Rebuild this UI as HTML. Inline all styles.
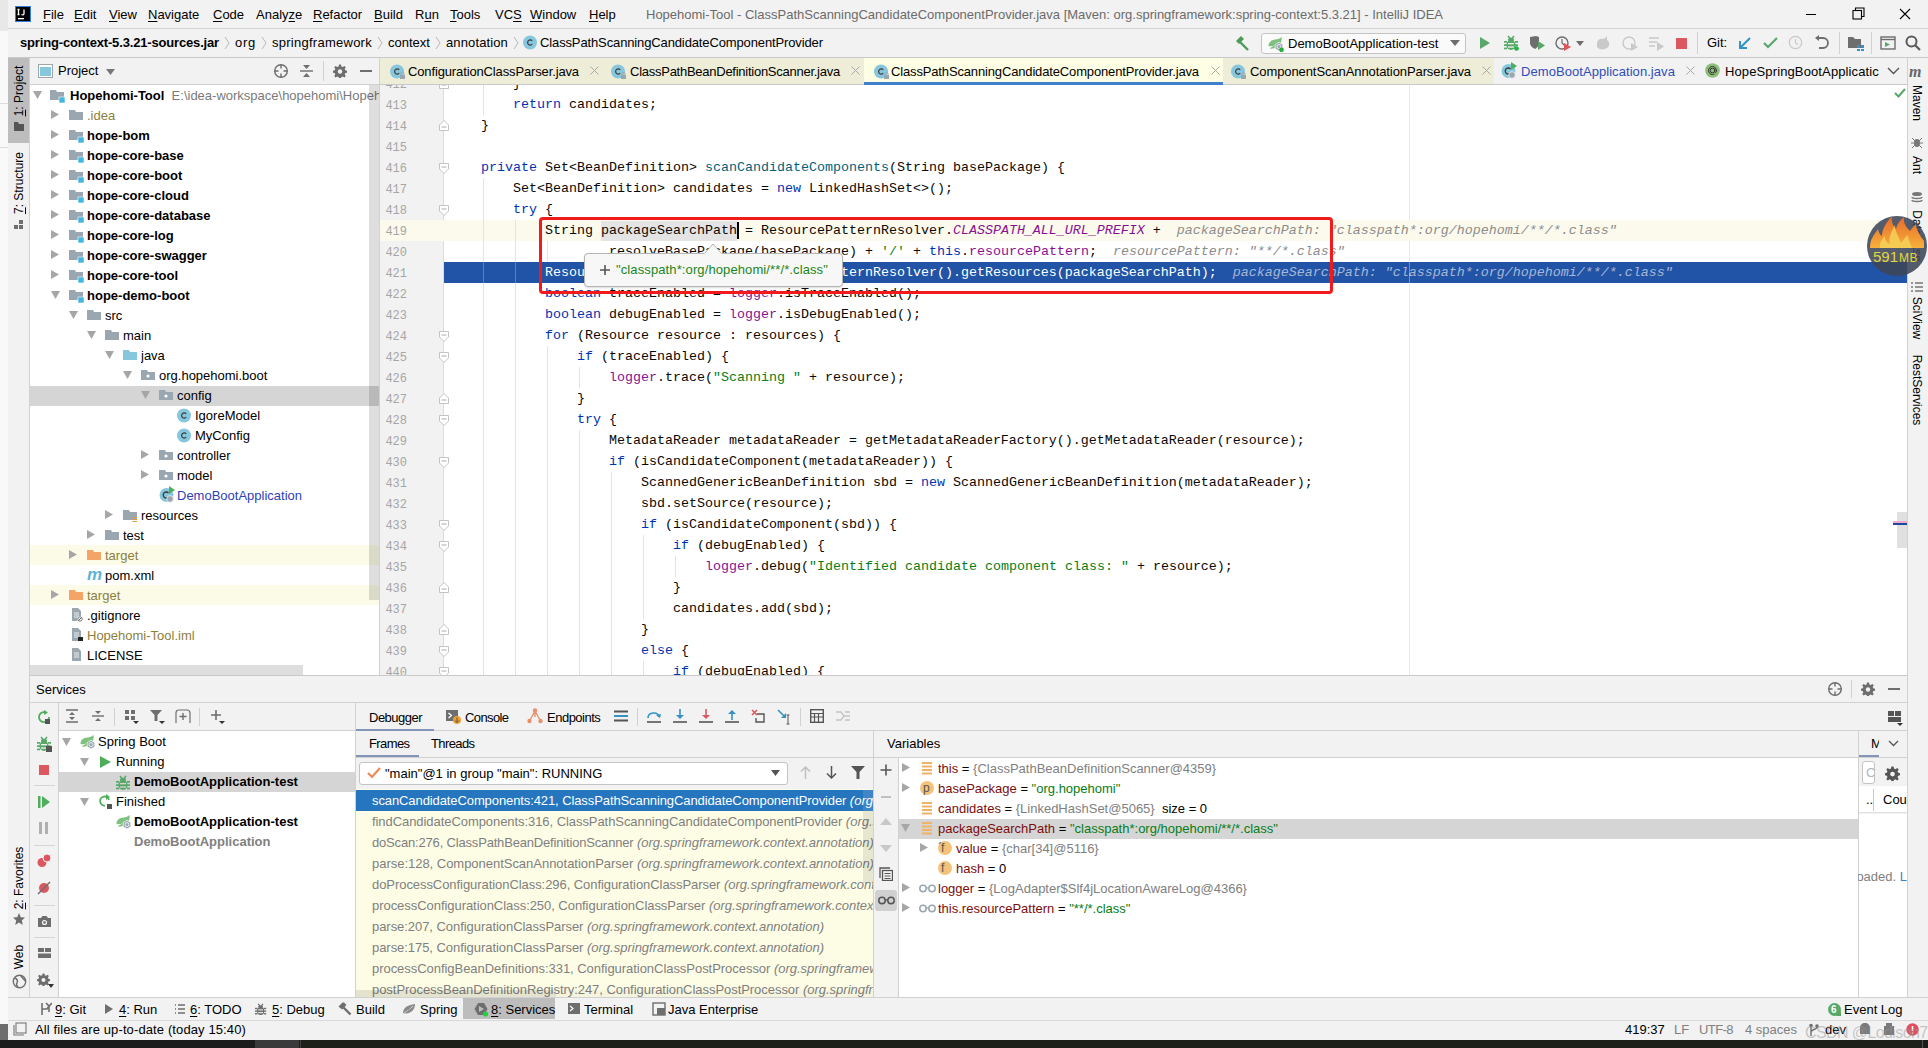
<!DOCTYPE html>
<html><head><meta charset="utf-8">
<style>
*{margin:0;padding:0;box-sizing:border-box}
html,body{width:1928px;height:1048px;overflow:hidden;background:#f2f2f2;font-family:"Liberation Sans",sans-serif;font-size:13px;color:#000}
.a{position:absolute}
.t{position:absolute;white-space:pre;line-height:16px}
.m{font-family:"Liberation Mono",monospace}
u{text-decoration:underline;text-underline-offset:2px}
</style></head><body>

<div class="a" style="left:0px;top:0px;width:8px;height:31px;background:#e8e8e8;"></div>
<div class="a" style="left:0px;top:31px;width:8px;height:1009px;background:#f9f9f9;"></div>
<div class="a" style="left:0px;top:103px;width:8px;height:1px;background:#dcdcdc;"></div>
<div class="a" style="left:0px;top:147px;width:8px;height:1px;background:#dcdcdc;"></div>
<div class="a" style="left:0px;top:1024px;width:8px;height:16px;background:#6e6e6e;"></div>
<div class="a" style="left:8px;top:0px;width:1920px;height:28px;background:#f2f2f2;"></div>
<div class="a" style="left:8px;top:28px;width:1920px;height:1px;background:#d4d4d4;"></div>
<svg class="a" style="left:15px;top:6px;" width="16" height="16" viewBox="0 0 16 16"><rect x="0.5" y="0.5" width="15" height="15" fill="#000" stroke="#2f7fe0"/><path d="M3.5 3.5V8.5M2.5 3.5H4.5M2.5 8.5H4.5M9 3.5V7.5C9 9 7.5 9 6.5 8.5" fill="none" stroke="#fff" stroke-width="1.3"/><rect x="3" y="12" width="6" height="1.3" fill="#fff"/></svg>
<div class="t" style="left:43px;top:7px;color:#000"><u>F</u>ile</div>
<div class="t" style="left:74px;top:7px;color:#000"><u>E</u>dit</div>
<div class="t" style="left:109px;top:7px;color:#000"><u>V</u>iew</div>
<div class="t" style="left:148px;top:7px;color:#000"><u>N</u>avigate</div>
<div class="t" style="left:213px;top:7px;color:#000"><u>C</u>ode</div>
<div class="t" style="left:256px;top:7px;color:#000">Analy<u>z</u>e</div>
<div class="t" style="left:313px;top:7px;color:#000"><u>R</u>efactor</div>
<div class="t" style="left:374px;top:7px;color:#000"><u>B</u>uild</div>
<div class="t" style="left:415px;top:7px;color:#000">R<u>u</u>n</div>
<div class="t" style="left:450px;top:7px;color:#000"><u>T</u>ools</div>
<div class="t" style="left:495px;top:7px;color:#000">VC<u>S</u></div>
<div class="t" style="left:530px;top:7px;color:#000"><u>W</u>indow</div>
<div class="t" style="left:589px;top:7px;color:#000"><u>H</u>elp</div>
<div class="t" style="left:646px;top:7px;color:#6b6b6b">Hopehomi-Tool - ClassPathScanningCandidateComponentProvider.java [Maven: org.springframework:spring-context:5.3.21] - IntelliJ IDEA</div>
<div class="a" style="left:1806px;top:14px;width:10px;height:1px;background:#000;"></div>
<svg class="a" style="left:1852px;top:7px;" width="13" height="13" viewBox="0 0 13 13"><rect x="1" y="3.5" width="8.5" height="8.5" fill="none" stroke="#000" stroke-width="1.1"/><path d="M3.5 3.5V1h8.5v8.5H9.5" fill="none" stroke="#000" stroke-width="1.1"/></svg>
<svg class="a" style="left:1899px;top:8px;" width="12" height="12" viewBox="0 0 12 12"><path d="M1 1L11 11M11 1L1 11" stroke="#000" stroke-width="1.1"/></svg>
<div class="a" style="left:8px;top:29px;width:1920px;height:28px;background:#f2f2f2;"></div>
<div class="a" style="left:8px;top:57px;width:1920px;height:1px;background:#c9c9c9;"></div>
<div class="t" style="left:20px;top:35px;letter-spacing:-0.166px;font-weight:bold">spring-context-5.3.21-sources.jar</div>
<svg class="a" style="left:224px;top:36px;" width="6" height="14" viewBox="0 0 6 14"><path d="M1 1L5 7L1 13" fill="none" stroke="#b8b8b8" stroke-width="1"/></svg>
<div class="t" style="left:235px;top:35px;letter-spacing:0.734px;">org</div>
<svg class="a" style="left:261px;top:36px;" width="6" height="14" viewBox="0 0 6 14"><path d="M1 1L5 7L1 13" fill="none" stroke="#b8b8b8" stroke-width="1"/></svg>
<div class="t" style="left:272px;top:35px;letter-spacing:0.259px;">springframework</div>
<svg class="a" style="left:377px;top:36px;" width="6" height="14" viewBox="0 0 6 14"><path d="M1 1L5 7L1 13" fill="none" stroke="#b8b8b8" stroke-width="1"/></svg>
<div class="t" style="left:388px;top:35px;letter-spacing:0.011px;">context</div>
<svg class="a" style="left:435px;top:36px;" width="6" height="14" viewBox="0 0 6 14"><path d="M1 1L5 7L1 13" fill="none" stroke="#b8b8b8" stroke-width="1"/></svg>
<div class="t" style="left:446px;top:35px;letter-spacing:0.125px;">annotation</div>
<svg class="a" style="left:513px;top:36px;" width="6" height="14" viewBox="0 0 6 14"><path d="M1 1L5 7L1 13" fill="none" stroke="#b8b8b8" stroke-width="1"/></svg>
<svg class="a" style="left:523px;top:35px;" width="16" height="16" viewBox="0 0 16 16"><circle cx="7" cy="7.5" r="7" fill="#86c7de"/><path d="M9.2 5.8A2.6 2.6 0 1 0 9.2 9.2" fill="none" stroke="#3c3c3c" stroke-width="1.2"/></svg>
<div class="t" style="left:540px;top:35px;letter-spacing:-0.127px;">ClassPathScanningCandidateComponentProvider</div>
<svg class="a" style="left:1234px;top:35px;" width="16" height="16" viewBox="0 0 16 16"><path d="M2 6L7 1L10 4L5 9Z" fill="#4d9b57"/><path d="M6 7L14 15" stroke="#4d9b57" stroke-width="2.4"/></svg>
<div class="a" style="left:1261px;top:33px;width:205px;height:21px;background:#fafafa;border:1px solid #c4c4c4;border-radius:3px"></div>
<svg class="a" style="left:1268px;top:36px;" width="16" height="16" viewBox="0 0 16 16"><path d="M0.5 10C0.5 6 3.5 3.8 7.5 3.6C10 3.5 12 2.8 13.5 0.8C14.2 4.5 13 8 10.3 10.2C7.8 12.2 4 13 1.5 12.5C3 11.5 4.5 10.6 6.5 9.6C4.5 10.2 2.3 10.6 0.5 10Z" fill="#7fc27f"/><path d="M11 6.3L14.8 8.5V12.8L11 15L7.2 12.8V8.5Z" fill="#9aa7b0" stroke="#fff" stroke-width="0.7"/><circle cx="11" cy="10.6" r="2" fill="none" stroke="#fff" stroke-width="0.8"/><circle cx="13.5" cy="13.8" r="2.3" fill="#1fb33a"/></svg>
<div class="t" style="left:1288px;top:36px;">DemoBootApplication-test</div>
<svg class="a" style="left:1450px;top:40px;" width="10" height="6" viewBox="0 0 10 6"><path d="M0 0H10L5 6Z" fill="#6e6e6e"/></svg>
<svg class="a" style="left:1479px;top:36px;" width="12" height="14" viewBox="0 0 12 14"><path d="M1 1L11 7L1 13Z" fill="#59a869"/></svg>
<svg class="a" style="left:1504px;top:35px;" width="16" height="16" viewBox="0 0 16 16"><path d="M4 1L6 3.5M10 1L8 3.5" stroke="#59a869" stroke-width="1.5"/><ellipse cx="7" cy="4.8" rx="3" ry="2" fill="#59a869"/><ellipse cx="7" cy="10" rx="4.6" ry="5" fill="#59a869"/><rect x="0" y="6" width="3" height="1.7" fill="#59a869"/><rect x="0" y="9.3" width="3" height="1.7" fill="#59a869"/><rect x="0" y="12.6" width="3" height="1.7" fill="#59a869"/><rect x="11" y="6" width="3" height="1.7" fill="#59a869"/><rect x="11" y="9.3" width="3" height="1.7" fill="#59a869"/><rect x="11" y="12.6" width="3" height="1.7" fill="#59a869"/><rect x="4" y="8" width="6" height="1.3" fill="#f2f2f2"/><rect x="4" y="11.4" width="6" height="1.3" fill="#f2f2f2"/><circle cx="12.5" cy="13.5" r="2.3" fill="#1fb33a"/></svg>
<svg class="a" style="left:1529px;top:35px;" width="17" height="16" viewBox="0 0 17 16"><path d="M1 2L7 1L10 2V8C10 11 8 13 6 14C4 13 1 11 1 8Z" fill="#6e6e6e"/><path d="M9 6L16 10.5L9 15Z" fill="#59a869"/></svg>
<svg class="a" style="left:1555px;top:35px;" width="17" height="16" viewBox="0 0 17 16"><circle cx="7" cy="8" r="6" fill="none" stroke="#6e6e6e" stroke-width="1.4"/><path d="M7 4V8L9 10" stroke="#6e6e6e" stroke-width="1.2" fill="none"/><path d="M9 8L16 12L9 16Z" fill="#e05555"/></svg>
<svg class="a" style="left:1576px;top:41px;" width="8" height="5" viewBox="0 0 8 5"><path d="M0 0H8L4 5Z" fill="#6e6e6e"/></svg>
<svg class="a" style="left:1595px;top:35px;" width="17" height="16" viewBox="0 0 17 16"><path d="M2 9C2 5 5 3 9 4L12 1L12 5C15 7 15 11 12 13C9 15 4 15 2 12Z" fill="#c9c9c9"/></svg>
<svg class="a" style="left:1622px;top:35px;" width="17" height="16" viewBox="0 0 17 16"><circle cx="7" cy="8" r="6" fill="none" stroke="#c9c9c9" stroke-width="1.4"/><path d="M9 8L16 12L9 16Z" fill="#c9c9c9"/></svg>
<svg class="a" style="left:1648px;top:35px;" width="17" height="16" viewBox="0 0 17 16"><path d="M1 3H11M1 7H9M1 11H7" stroke="#c9c9c9" stroke-width="1.6"/><path d="M9 7L16 11.5L9 16Z" fill="#c9c9c9"/></svg>
<div class="a" style="left:1676px;top:38px;width:11px;height:11px;background:#db5860;"></div>
<div class="a" style="left:1697px;top:32px;width:1px;height:22px;background:#d0d0d0;"></div>
<div class="t" style="left:1707px;top:35px;">Git:</div>
<svg class="a" style="left:1738px;top:36px;" width="14" height="14" viewBox="0 0 14 14"><path d="M12 2L3 11M2 5V12H9" fill="none" stroke="#3592c4" stroke-width="2"/></svg>
<svg class="a" style="left:1763px;top:37px;" width="15" height="12" viewBox="0 0 15 12"><path d="M1 6L5 10L14 1" fill="none" stroke="#59a869" stroke-width="2.2"/></svg>
<svg class="a" style="left:1788px;top:35px;" width="15" height="15" viewBox="0 0 15 15"><circle cx="7.5" cy="7.5" r="6.2" fill="none" stroke="#c9c9c9" stroke-width="1.3"/><path d="M7.5 4V8L10 9.5" stroke="#c9c9c9" stroke-width="1.2" fill="none"/></svg>
<svg class="a" style="left:1814px;top:35px;" width="16" height="15" viewBox="0 0 16 15"><path d="M4 3H9A5 5 0 0 1 9 13H5" fill="none" stroke="#6e6e6e" stroke-width="1.8"/><path d="M1 3L5 0V6Z" fill="#6e6e6e"/></svg>
<div class="a" style="left:1839px;top:32px;width:1px;height:22px;background:#d0d0d0;"></div>
<svg class="a" style="left:1847px;top:35px;" width="17" height="16" viewBox="0 0 17 16"><path d="M1 2H6L8 4H14V13H1Z" fill="#6e6e6e"/><rect x="10" y="10" width="3" height="3" fill="#3592c4"/><rect x="14" y="10" width="3" height="3" fill="#3592c4"/><rect x="10" y="14" width="3" height="2" fill="#3592c4"/><rect x="14" y="14" width="3" height="2" fill="#3592c4"/></svg>
<div class="a" style="left:1871px;top:32px;width:1px;height:22px;background:#d0d0d0;"></div>
<svg class="a" style="left:1880px;top:35px;" width="16" height="16" viewBox="0 0 16 16"><rect x="1" y="2" width="14" height="12" fill="none" stroke="#6e6e6e" stroke-width="1.4"/><path d="M1 4.5H15" stroke="#6e6e6e" stroke-width="1.4"/><path d="M5 7L10 9.5L5 12Z" fill="#59a869"/></svg>
<svg class="a" style="left:1905px;top:35px;" width="16" height="16" viewBox="0 0 16 16"><circle cx="6.5" cy="6.5" r="5" fill="none" stroke="#5a5a5a" stroke-width="2"/><path d="M10 10L15 15" stroke="#5a5a5a" stroke-width="2.2"/></svg>
<div class="a" style="left:8px;top:58px;width:21px;height:939px;background:#f2f2f2;"></div>
<div class="a" style="left:29px;top:58px;width:1px;height:939px;background:#d1d1d1;"></div>
<div class="a" style="left:8px;top:58px;width:21px;height:85px;background:#bdbdbd;"></div>
<div class="t" style="left:19px;top:91px;transform:translate(-50%,-50%) rotate(-90deg);font-size:12px"><u>1</u>: Project</div>
<svg class="a" style="left:13px;top:121px;" width="12" height="11" viewBox="0 0 12 11"><path d="M1 1H5L6 3H11V10H1Z" fill="#555"/></svg>
<div class="t" style="left:19px;top:183px;transform:translate(-50%,-50%) rotate(-90deg);font-size:12px"><u>7</u>: Structure</div>
<svg class="a" style="left:13px;top:219px;" width="12" height="11" viewBox="0 0 12 11"><rect x="6" y="1" width="4" height="4" fill="#6e6e6e"/><rect x="1" y="6" width="4" height="4" fill="#6e6e6e"/><rect x="6" y="6" width="4" height="4" fill="#6e6e6e"/></svg>
<div class="t" style="left:19px;top:878px;transform:translate(-50%,-50%) rotate(-90deg);font-size:12px"><u>2</u>: Favorites</div>
<svg class="a" style="left:12px;top:912px;" width="14" height="14" viewBox="0 0 14 14"><path d="M7 1L8.8 5.2L13 5.5L9.8 8.4L10.8 13L7 10.5L3.2 13L4.2 8.4L1 5.5L5.2 5.2Z" fill="#6e6e6e"/></svg>
<div class="t" style="left:19px;top:957px;transform:translate(-50%,-50%) rotate(-90deg);font-size:12px">Web</div>
<svg class="a" style="left:12px;top:974px;" width="15" height="15" viewBox="0 0 15 15"><circle cx="7.5" cy="7.5" r="6.2" fill="none" stroke="#6e6e6e" stroke-width="1.4"/><path d="M3 4C5 5 6 7 5 9C4 10 5 12 6 13M9 2C10 4 12 5 13 7" fill="none" stroke="#6e6e6e" stroke-width="1.4"/></svg>
<div class="a" style="left:1908px;top:58px;width:20px;height:939px;background:#f2f2f2;"></div>
<div class="a" style="left:1907px;top:58px;width:1px;height:939px;background:#d1d1d1;"></div>
<div class="t" style="left:1909px;top:63px;font:italic bold 16px 'Liberation Serif';color:#666">m</div>
<div class="t" style="left:1917px;top:103px;transform:translate(-50%,-50%) rotate(90deg);font-size:12px">Maven</div>
<svg class="a" style="left:1910px;top:135px;" width="14" height="14" viewBox="0 0 14 14"><ellipse cx="7" cy="8" rx="3" ry="4" fill="#777"/><path d="M2 3L5 6M12 3L9 6M1 8H4M10 8H13M2 13L5 10M12 13L9 10" stroke="#777" stroke-width="1"/></svg>
<div class="t" style="left:1917px;top:165px;transform:translate(-50%,-50%) rotate(90deg);font-size:12px">Ant</div>
<svg class="a" style="left:1910px;top:191px;" width="14" height="14" viewBox="0 0 14 14"><ellipse cx="7" cy="3" rx="5" ry="2" fill="#777"/><path d="M2 6C2 8 12 8 12 6M2 9C2 11 12 11 12 9" fill="none" stroke="#777" stroke-width="1.4"/></svg>
<div class="t" style="left:1917px;top:236px;transform:translate(-50%,-50%) rotate(90deg);font-size:12px">Database</div>
<svg class="a" style="left:1910px;top:281px;" width="14" height="12" viewBox="0 0 14 12"><path d="M1 2H3M5 2H13M1 6H3M5 6H13M1 10H3M5 10H13" stroke="#777" stroke-width="1.6"/></svg>
<div class="t" style="left:1917px;top:318px;transform:translate(-50%,-50%) rotate(90deg);font-size:12px">SciView</div>
<div class="t" style="left:1917px;top:390px;transform:translate(-50%,-50%) rotate(90deg);font-size:12px">RestServices</div>
<div class="a" style="left:8px;top:997px;width:1920px;height:23px;background:#f2f2f2;"></div>
<div class="a" style="left:8px;top:997px;width:1920px;height:1px;background:#d1d1d1;"></div>
<svg class="a" style="left:40px;top:1002px;" width="12" height="14" viewBox="0 0 12 14"><path d="M2 13V1M2 7H7L9 4M9 4V10M6 1L9 4L12 1" fill="none" stroke="#6e6e6e" stroke-width="1.6"/></svg>
<div class="t" style="left:55px;top:1002px;"><u>9</u>: Git</div>
<svg class="a" style="left:104px;top:1003px;" width="10" height="12" viewBox="0 0 10 12"><path d="M1 1L9 6L1 11Z" fill="#6e6e6e"/></svg>
<div class="t" style="left:119px;top:1002px;"><u>4</u>: Run</div>
<svg class="a" style="left:174px;top:1004px;" width="12" height="10" viewBox="0 0 12 10"><path d="M1 1H2M4 1H11M1 5H2M4 5H11M1 9H2M4 9H11" stroke="#6e6e6e" stroke-width="1.6"/></svg>
<div class="t" style="left:190px;top:1002px;"><u>6</u>: TODO</div>
<div class="a" style="left:255px;top:1003px;transform:scale(0.8);transform-origin:0 0">
<svg class="a" style="left:0px;top:0px;" width="16" height="16" viewBox="0 0 16 16"><path d="M4 1L6 3.5M10 1L8 3.5" stroke="#6e6e6e" stroke-width="1.5"/><ellipse cx="7" cy="4.8" rx="3" ry="2" fill="#6e6e6e"/><ellipse cx="7" cy="10" rx="4.6" ry="5" fill="#6e6e6e"/><rect x="0" y="6" width="3" height="1.7" fill="#6e6e6e"/><rect x="0" y="9.3" width="3" height="1.7" fill="#6e6e6e"/><rect x="0" y="12.6" width="3" height="1.7" fill="#6e6e6e"/><rect x="11" y="6" width="3" height="1.7" fill="#6e6e6e"/><rect x="11" y="9.3" width="3" height="1.7" fill="#6e6e6e"/><rect x="11" y="12.6" width="3" height="1.7" fill="#6e6e6e"/><rect x="4" y="8" width="6" height="1.3" fill="#f2f2f2"/><rect x="4" y="11.4" width="6" height="1.3" fill="#f2f2f2"/></svg>
</div>
<div class="t" style="left:272px;top:1002px;"><u>5</u>: Debug</div>
<svg class="a" style="left:338px;top:1002px;" width="14" height="14" viewBox="0 0 14 14"><path d="M0.5 4.5L4.5 0.5L6 0.5L8.5 3L4 7.5Z" fill="#6e6e6e"/><path d="M5.5 5.5L12.5 12.5" stroke="#6e6e6e" stroke-width="2.4"/></svg>
<div class="t" style="left:356px;top:1002px;">Build</div>
<svg class="a" style="left:402px;top:1003px;" width="14" height="12" viewBox="0 0 14 12"><path d="M1 10C1 5 5 2 13 1C13 6 10 10 4 10.5C3 10.6 2 10.5 1 10Z" fill="#8a8a8a"/><path d="M2 10C5 8 8 6 11 3" stroke="#f2f2f2" stroke-width="0.8"/></svg>
<div class="t" style="left:420px;top:1002px;">Spring</div>
<div class="a" style="left:463px;top:998px;width:92px;height:21px;background:#bdbdbd;"></div>
<svg class="a" style="left:474px;top:1002px;" width="16" height="15" viewBox="0 0 16 15"><path d="M4 1H10L13.5 7L10 13H4L0.5 7Z" fill="#6e6e6e"/><path d="M5 4L10 7L5 10Z" fill="#bdbdbd"/><circle cx="11.5" cy="12" r="2.6" fill="#1fd33a"/></svg>
<div class="t" style="left:491px;top:1002px;"><u>8</u>: Services</div>
<svg class="a" style="left:567px;top:1002px;" width="14" height="13" viewBox="0 0 14 13"><rect x="1" y="1" width="12" height="11" fill="#6e6e6e"/><path d="M3 4L6 6.5L3 9" fill="none" stroke="#fff" stroke-width="1.2"/></svg>
<div class="t" style="left:584px;top:1002px;">Terminal</div>
<svg class="a" style="left:652px;top:1002px;" width="14" height="14" viewBox="0 0 14 14"><rect x="1" y="1" width="12" height="12" fill="none" stroke="#6e6e6e" stroke-width="1.4"/><rect x="5" y="6" width="8" height="7" fill="#6e6e6e"/></svg>
<div class="t" style="left:668px;top:1002px;">Java Enterprise</div>
<svg class="a" style="left:1827px;top:1002px;" width="15" height="15" viewBox="0 0 15 15"><circle cx="7.5" cy="7.5" r="6.5" fill="#59a869"/><path d="M9 14H14V9Z" fill="#59a869"/></svg>
<div class="t" style="left:1831px;top:1002px;font:bold 10px 'Liberation Sans';color:#fff;line-height:15px">6</div>
<div class="t" style="left:1844px;top:1002px;">Event Log</div>
<div class="a" style="left:8px;top:1020px;width:1920px;height:20px;background:#f2f2f2;"></div>
<div class="a" style="left:8px;top:1020px;width:1920px;height:1px;background:#d9d9d9;"></div>
<svg class="a" style="left:13px;top:1022px;" width="14" height="14" viewBox="0 0 14 14"><rect x="3" y="1" width="10" height="10" fill="none" stroke="#777" stroke-width="1.1"/><path d="M1 3V13H11" fill="none" stroke="#777" stroke-width="1.1"/></svg>
<div class="t" style="left:35px;top:1022px;letter-spacing:0.113px;">All files are up-to-date (today 15:40)</div>
<div class="t" style="left:1625px;top:1022px;">419:37</div>
<div class="t" style="left:1674px;top:1022px;color:#808080">LF</div>
<div class="t" style="left:1699px;top:1022px;letter-spacing:-0.566px;color:#808080">UTF-8</div>
<div class="t" style="left:1745px;top:1022px;color:#808080">4 spaces</div>
<div class="t" style="left:1825px;top:1022px;">dev</div>
<svg class="a" style="left:1807px;top:1023px;" width="14" height="14" viewBox="0 0 14 14"><circle cx="4" cy="2.5" r="1.8" fill="#6e6e6e"/><path d="M4 3V13M4 9C4 6 10 7 10 4" fill="none" stroke="#6e6e6e" stroke-width="1.4"/><circle cx="10" cy="3" r="1.8" fill="#6e6e6e"/></svg>
<svg class="a" style="left:1857px;top:1022px;" width="16" height="15" viewBox="0 0 16 15"><path d="M3 12V6C3 3 5 1 8 1C11 1 13 3 13 6V12Z" fill="#7a7a7a"/></svg>
<svg class="a" style="left:1882px;top:1022px;" width="14" height="15" viewBox="0 0 14 15"><rect x="2" y="4" width="10" height="9" fill="#7a7a7a"/><rect x="4" y="1" width="6" height="4" fill="#7a7a7a"/></svg>
<svg class="a" style="left:1906px;top:1023px;" width="13" height="13" viewBox="0 0 13 13"><circle cx="6.5" cy="6.5" r="6.2" fill="#e05060"/><path d="M6.5 3V8M6.5 9.5V10.5" stroke="#fff" stroke-width="1.5"/></svg>
<div class="t" style="left:1805px;top:1023px;font-size:16px;letter-spacing:-0.6px;color:rgba(150,150,150,0.5);line-height:20px">CSDN @Lodison7</div>
<div class="a" style="left:0px;top:1040px;width:1928px;height:8px;background:#1c1c1c;"></div>
<div class="a" style="left:255px;top:1040px;width:44px;height:8px;background:#3a3a3a;"></div>
<div class="a" style="left:300px;top:1040px;width:1px;height:8px;background:#444;"></div>
<div class="a" style="left:302px;top:1040px;width:1620px;height:8px;background:#1d1f19;"></div>
<div class="a" style="left:1922px;top:1040px;width:1px;height:8px;background:#555;"></div>
<div class="a" style="left:380px;top:85px;width:64px;height:590px;background:#f2f2f2;"></div>
<div class="a" style="left:443px;top:85px;width:1px;height:590px;background:#dcdcdc;"></div>
<div class="a" style="left:444px;top:85px;width:1463px;height:590px;background:#ffffff;"></div>
<div class="a" style="left:1409px;top:85px;width:1px;height:590px;background:#e8e8e8;"></div>
<div class="a" style="left:380px;top:220px;width:64px;height:21px;background:#fcfaed;"></div>
<div class="a" style="left:444px;top:220px;width:1463px;height:21px;background:#fcfaed;"></div>
<div class="a" style="left:444px;top:262px;width:1463px;height:21px;background:#2154a6;"></div>
<div class="a" style="left:483px;top:73px;width:1px;height:42px;background:#e4e4e4;"></div>
<div class="a" style="left:483px;top:178px;width:1px;height:504px;background:#e4e4e4;"></div>
<div class="a" style="left:515px;top:220px;width:1px;height:462px;background:#e4e4e4;"></div>
<div class="a" style="left:547px;top:241px;width:1px;height:21px;background:#e4e4e4;"></div>
<div class="a" style="left:547px;top:346px;width:1px;height:336px;background:#e4e4e4;"></div>
<div class="a" style="left:579px;top:367px;width:1px;height:21px;background:#e4e4e4;"></div>
<div class="a" style="left:579px;top:430px;width:1px;height:252px;background:#e4e4e4;"></div>
<div class="a" style="left:611px;top:472px;width:1px;height:210px;background:#e4e4e4;"></div>
<div class="a" style="left:643px;top:535px;width:1px;height:84px;background:#e4e4e4;"></div>
<div class="a" style="left:643px;top:661px;width:1px;height:21px;background:#e4e4e4;"></div>
<div class="a" style="left:675px;top:556px;width:1px;height:21px;background:#e4e4e4;"></div>
<div class="a" style="left:483px;top:262px;width:1px;height:21px;background:#5b7fc0;"></div>
<div class="a" style="left:515px;top:262px;width:1px;height:21px;background:#5b7fc0;"></div>
<div class="a" style="left:601px;top:221px;width:136px;height:20px;background:#e4e4e4;"></div>
<div class="a m" style="left:449px;top:73px;font-size:13.333px;line-height:21px;white-space:pre;color:#080808"><div style="height:21px">        }</div><div style="height:21px">        <span style="color:#0033b3;">return</span> candidates;</div><div style="height:21px">    }</div><div style="height:21px"></div><div style="height:21px">    <span style="color:#0033b3;">private</span> Set&lt;BeanDefinition&gt; <span style="color:#00627a;">scanCandidateComponents</span>(String basePackage) {</div><div style="height:21px">        Set&lt;BeanDefinition&gt; candidates = <span style="color:#0033b3;">new</span> LinkedHashSet&lt;&gt;();</div><div style="height:21px">        <span style="color:#0033b3;">try</span> {</div><div style="height:21px">            String packageSearchPath = ResourcePatternResolver.<span style="color:#871094;font-style:italic;">CLASSPATH_ALL_URL_PREFIX</span> +<span style="color:#8c8c8c;font-style:italic;">  packageSearchPath: "classpath*:org/hopehomi/**/*.class"</span></div><div style="height:21px">                    resolveBasePackage(basePackage) + <span style="color:#067d17;">'/'</span> + <span style="color:#0033b3;">this</span>.<span style="color:#871094;">resourcePattern</span>;<span style="color:#8c8c8c;font-style:italic;">  resourcePattern: "**/*.class"</span></div><div style="height:21px"><span style="color:#ffffff;">            Resource[] resources = getResourcePatternResolver().getResources(packageSearchPath);</span><span style="color:#a7b8d8;font-style:italic;">  packageSearchPath: "classpath*:org/hopehomi/**/*.class"</span></div><div style="height:21px">            <span style="color:#0033b3;">boolean</span> traceEnabled = <span style="color:#871094;">logger</span>.isTraceEnabled();</div><div style="height:21px">            <span style="color:#0033b3;">boolean</span> debugEnabled = <span style="color:#871094;">logger</span>.isDebugEnabled();</div><div style="height:21px">            <span style="color:#0033b3;">for</span> (Resource resource : resources) {</div><div style="height:21px">                <span style="color:#0033b3;">if</span> (traceEnabled) {</div><div style="height:21px">                    <span style="color:#871094;">logger</span>.trace(<span style="color:#067d17;">"Scanning "</span> + resource);</div><div style="height:21px">                }</div><div style="height:21px">                <span style="color:#0033b3;">try</span> {</div><div style="height:21px">                    MetadataReader metadataReader = getMetadataReaderFactory().getMetadataReader(resource);</div><div style="height:21px">                    <span style="color:#0033b3;">if</span> (isCandidateComponent(metadataReader)) {</div><div style="height:21px">                        ScannedGenericBeanDefinition sbd = <span style="color:#0033b3;">new</span> ScannedGenericBeanDefinition(metadataReader);</div><div style="height:21px">                        sbd.setSource(resource);</div><div style="height:21px">                        <span style="color:#0033b3;">if</span> (isCandidateComponent(sbd)) {</div><div style="height:21px">                            <span style="color:#0033b3;">if</span> (debugEnabled) {</div><div style="height:21px">                                <span style="color:#871094;">logger</span>.debug(<span style="color:#067d17;">"Identified candidate component class: "</span> + resource);</div><div style="height:21px">                            }</div><div style="height:21px">                            candidates.add(sbd);</div><div style="height:21px">                        }</div><div style="height:21px">                        <span style="color:#0033b3;">else</span> {</div><div style="height:21px">                            <span style="color:#0033b3;">if</span> (debugEnabled) {</div></div>
<div class="a" style="left:1409px;top:262px;width:1px;height:21px;background:rgba(255,255,255,0.35);"></div>
<div class="a" style="left:737px;top:222px;width:2px;height:17px;background:#000;"></div>
<div class="a m" style="left:383px;top:75px;width:24px;font-size:12px;line-height:21px;color:#a6a6a6;text-align:right">
<div style="height:21px">412</div>
<div style="height:21px">413</div>
<div style="height:21px">414</div>
<div style="height:21px">415</div>
<div style="height:21px">416</div>
<div style="height:21px">417</div>
<div style="height:21px">418</div>
<div style="height:21px">419</div>
<div style="height:21px">420</div>
<div style="height:21px">421</div>
<div style="height:21px">422</div>
<div style="height:21px">423</div>
<div style="height:21px">424</div>
<div style="height:21px">425</div>
<div style="height:21px">426</div>
<div style="height:21px">427</div>
<div style="height:21px">428</div>
<div style="height:21px">429</div>
<div style="height:21px">430</div>
<div style="height:21px">431</div>
<div style="height:21px">432</div>
<div style="height:21px">433</div>
<div style="height:21px">434</div>
<div style="height:21px">435</div>
<div style="height:21px">436</div>
<div style="height:21px">437</div>
<div style="height:21px">438</div>
<div style="height:21px">439</div>
<div style="height:21px">440</div>
</div>
<svg class="a" style="left:439px;top:163px;" width="10" height="11" viewBox="0 0 10 11"><path d="M0.5 0.5H9.5V6L5 10.5L0.5 6Z" fill="#fff" stroke="#c4c4c4"/><path d="M2.5 4H7.5" stroke="#aaa"/></svg>
<svg class="a" style="left:439px;top:205px;" width="10" height="11" viewBox="0 0 10 11"><path d="M0.5 0.5H9.5V6L5 10.5L0.5 6Z" fill="#fff" stroke="#c4c4c4"/><path d="M2.5 4H7.5" stroke="#aaa"/></svg>
<svg class="a" style="left:439px;top:331px;" width="10" height="11" viewBox="0 0 10 11"><path d="M0.5 0.5H9.5V6L5 10.5L0.5 6Z" fill="#fff" stroke="#c4c4c4"/><path d="M2.5 4H7.5" stroke="#aaa"/></svg>
<svg class="a" style="left:439px;top:352px;" width="10" height="11" viewBox="0 0 10 11"><path d="M0.5 0.5H9.5V6L5 10.5L0.5 6Z" fill="#fff" stroke="#c4c4c4"/><path d="M2.5 4H7.5" stroke="#aaa"/></svg>
<svg class="a" style="left:439px;top:415px;" width="10" height="11" viewBox="0 0 10 11"><path d="M0.5 0.5H9.5V6L5 10.5L0.5 6Z" fill="#fff" stroke="#c4c4c4"/><path d="M2.5 4H7.5" stroke="#aaa"/></svg>
<svg class="a" style="left:439px;top:457px;" width="10" height="11" viewBox="0 0 10 11"><path d="M0.5 0.5H9.5V6L5 10.5L0.5 6Z" fill="#fff" stroke="#c4c4c4"/><path d="M2.5 4H7.5" stroke="#aaa"/></svg>
<svg class="a" style="left:439px;top:520px;" width="10" height="11" viewBox="0 0 10 11"><path d="M0.5 0.5H9.5V6L5 10.5L0.5 6Z" fill="#fff" stroke="#c4c4c4"/><path d="M2.5 4H7.5" stroke="#aaa"/></svg>
<svg class="a" style="left:439px;top:541px;" width="10" height="11" viewBox="0 0 10 11"><path d="M0.5 0.5H9.5V6L5 10.5L0.5 6Z" fill="#fff" stroke="#c4c4c4"/><path d="M2.5 4H7.5" stroke="#aaa"/></svg>
<svg class="a" style="left:439px;top:646px;" width="10" height="11" viewBox="0 0 10 11"><path d="M0.5 0.5H9.5V6L5 10.5L0.5 6Z" fill="#fff" stroke="#c4c4c4"/><path d="M2.5 4H7.5" stroke="#aaa"/></svg>
<svg class="a" style="left:439px;top:667px;" width="10" height="11" viewBox="0 0 10 11"><path d="M0.5 0.5H9.5V6L5 10.5L0.5 6Z" fill="#fff" stroke="#c4c4c4"/><path d="M2.5 4H7.5" stroke="#aaa"/></svg>
<svg class="a" style="left:439px;top:120px;" width="10" height="11" viewBox="0 0 10 11"><path d="M0.5 10.5H9.5V5L5 0.5L0.5 5Z" fill="#fff" stroke="#c4c4c4"/><path d="M2.5 7H7.5" stroke="#aaa"/></svg>
<svg class="a" style="left:439px;top:393px;" width="10" height="11" viewBox="0 0 10 11"><path d="M0.5 10.5H9.5V5L5 0.5L0.5 5Z" fill="#fff" stroke="#c4c4c4"/><path d="M2.5 7H7.5" stroke="#aaa"/></svg>
<svg class="a" style="left:439px;top:582px;" width="10" height="11" viewBox="0 0 10 11"><path d="M0.5 10.5H9.5V5L5 0.5L0.5 5Z" fill="#fff" stroke="#c4c4c4"/><path d="M2.5 7H7.5" stroke="#aaa"/></svg>
<svg class="a" style="left:439px;top:624px;" width="10" height="11" viewBox="0 0 10 11"><path d="M0.5 10.5H9.5V5L5 0.5L0.5 5Z" fill="#fff" stroke="#c4c4c4"/><path d="M2.5 7H7.5" stroke="#aaa"/></svg>
<svg class="a" style="left:439px;top:78px;" width="10" height="11" viewBox="0 0 10 11"><path d="M0.5 10.5H9.5V5L5 0.5L0.5 5Z" fill="#fff" stroke="#c4c4c4"/><path d="M2.5 7H7.5" stroke="#aaa"/></svg>
<div class="a" style="left:539px;top:217px;width:794px;height:77px;border:3px solid #f21a1a;border-radius:4px"></div>
<div class="a" style="left:584px;top:253px;width:259px;height:34px;background:#f7f7f7;border:1px solid #b4b4b4;border-radius:4px;box-shadow:0 1px 2px rgba(0,0,0,0.15)"></div>
<svg class="a" style="left:704px;top:243px;" width="18" height="12" viewBox="0 0 18 12"><path d="M0 11L9 1L18 11" fill="#f7f7f7" stroke="#b4b4b4" stroke-width="1"/><rect x="0" y="10.5" width="18" height="2" fill="#f7f7f7"/></svg>
<svg class="a" style="left:599px;top:264px;" width="12" height="12" viewBox="0 0 12 12"><path d="M6 1V11M1 6H11" stroke="#555" stroke-width="1.6"/></svg>
<div class="t" style="left:616px;top:262px;letter-spacing:0.111px;color:#1b861b">"classpath*:org/hopehomi/**/*.class"</div>
<svg class="a" style="left:1894px;top:88px;" width="12" height="10" viewBox="0 0 12 10"><path d="M1 5L4.5 8.5L11 1" fill="none" stroke="#59a869" stroke-width="2"/></svg>
<div class="a" style="left:1897px;top:512px;width:10px;height:36px;background:#e0e0e0;"></div>
<div class="a" style="left:1893px;top:521px;width:14px;height:2px;background:#f0a8cc;"></div>
<div class="a" style="left:1893px;top:523px;width:14px;height:2px;background:#1d4aa0;"></div>
<div class="a" style="left:380px;top:58px;width:1527px;height:26px;background:#f2f2f2;"></div>
<div class="a" style="left:380px;top:84px;width:1527px;height:1px;background:#c9c9c9;"></div>
<div class="a" style="left:380px;top:58px;width:223px;height:26px;background:#eeedd7;"></div>
<svg class="a" style="left:390px;top:64px;" width="16" height="16" viewBox="0 0 16 16"><circle cx="7" cy="7.5" r="7" fill="#86c7de"/><path d="M9.2 5.8A2.6 2.6 0 1 0 9.2 9.2" fill="none" stroke="#3c3c3c" stroke-width="1.2"/><rect x="10" y="11" width="5" height="4" fill="#9aa7b0"/><path d="M11 11V9.8a1.5 1.5 0 0 1 3 0V11" fill="none" stroke="#9aa7b0" stroke-width="1"/></svg>
<div class="t" style="left:408px;top:64px;letter-spacing:-0.135px;color:#000">ConfigurationClassParser.java</div>
<svg class="a" style="left:590px;top:66px;" width="9" height="9" viewBox="0 0 9 9"><path d="M0.5 0.5L8.5 8.5M8.5 0.5L0.5 8.5" stroke="#a8a8a8" stroke-width="1"/></svg>
<div class="a" style="left:603px;top:58px;width:261px;height:26px;background:#eeedd7;"></div>
<svg class="a" style="left:611px;top:64px;" width="16" height="16" viewBox="0 0 16 16"><circle cx="7" cy="7.5" r="7" fill="#86c7de"/><path d="M9.2 5.8A2.6 2.6 0 1 0 9.2 9.2" fill="none" stroke="#3c3c3c" stroke-width="1.2"/><rect x="10" y="11" width="5" height="4" fill="#9aa7b0"/><path d="M11 11V9.8a1.5 1.5 0 0 1 3 0V11" fill="none" stroke="#9aa7b0" stroke-width="1"/></svg>
<div class="t" style="left:630px;top:64px;letter-spacing:-0.258px;color:#000">ClassPathBeanDefinitionScanner.java</div>
<svg class="a" style="left:851px;top:66px;" width="9" height="9" viewBox="0 0 9 9"><path d="M0.5 0.5L8.5 8.5M8.5 0.5L0.5 8.5" stroke="#a8a8a8" stroke-width="1"/></svg>
<div class="a" style="left:864px;top:58px;width:359px;height:26px;background:#fefee4;"></div>
<svg class="a" style="left:874px;top:64px;" width="16" height="16" viewBox="0 0 16 16"><circle cx="7" cy="7.5" r="7" fill="#86c7de"/><path d="M9.2 5.8A2.6 2.6 0 1 0 9.2 9.2" fill="none" stroke="#3c3c3c" stroke-width="1.2"/><rect x="10" y="11" width="5" height="4" fill="#9aa7b0"/><path d="M11 11V9.8a1.5 1.5 0 0 1 3 0V11" fill="none" stroke="#9aa7b0" stroke-width="1"/></svg>
<div class="t" style="left:891px;top:64px;letter-spacing:-0.150px;color:#000">ClassPathScanningCandidateComponentProvider.java</div>
<svg class="a" style="left:1211px;top:66px;" width="9" height="9" viewBox="0 0 9 9"><path d="M0.5 0.5L8.5 8.5M8.5 0.5L0.5 8.5" stroke="#a8a8a8" stroke-width="1"/></svg>
<div class="a" style="left:1223px;top:58px;width:271px;height:26px;background:#eeedd7;"></div>
<svg class="a" style="left:1231px;top:64px;" width="16" height="16" viewBox="0 0 16 16"><circle cx="7" cy="7.5" r="7" fill="#86c7de"/><path d="M9.2 5.8A2.6 2.6 0 1 0 9.2 9.2" fill="none" stroke="#3c3c3c" stroke-width="1.2"/><rect x="10" y="11" width="5" height="4" fill="#9aa7b0"/><path d="M11 11V9.8a1.5 1.5 0 0 1 3 0V11" fill="none" stroke="#9aa7b0" stroke-width="1"/></svg>
<div class="t" style="left:1250px;top:64px;letter-spacing:-0.091px;color:#000">ComponentScanAnnotationParser.java</div>
<svg class="a" style="left:1482px;top:66px;" width="9" height="9" viewBox="0 0 9 9"><path d="M0.5 0.5L8.5 8.5M8.5 0.5L0.5 8.5" stroke="#a8a8a8" stroke-width="1"/></svg>
<div class="a" style="left:864px;top:82px;width:359px;height:3px;background:#3f7fcb;"></div>
<svg class="a" style="left:1501px;top:62px;" width="17" height="17" viewBox="0 0 17 17"><circle cx="7.5" cy="9" r="7" fill="#87c7dd"/><path d="M9.5 7A3 3 0 1 0 9.5 11" fill="none" stroke="#3a3a3a" stroke-width="1.3"/><path d="M10 0L16 4L10 8Z" fill="#4fae5c"/><circle cx="11" cy="13" r="3.3" fill="#9aa7b0" stroke="#f2f2f2" stroke-width="0.8"/></svg>
<div class="t" style="left:1521px;top:64px;letter-spacing:0.061px;color:#2f4dbc">DemoBootApplication.java</div>
<svg class="a" style="left:1686px;top:66px;" width="9" height="9" viewBox="0 0 9 9"><path d="M0.5 0.5L8.5 8.5M8.5 0.5L0.5 8.5" stroke="#a8a8a8" stroke-width="1"/></svg>
<svg class="a" style="left:1705px;top:63px;" width="15" height="15" viewBox="0 0 15 15"><circle cx="7.5" cy="7.5" r="7.3" fill="#8dbf78"/><circle cx="7.5" cy="7.5" r="2.3" fill="none" stroke="#333" stroke-width="1"/><path d="M9.8 5.5V8.5C9.8 10 11.5 10 11.5 8C11.5 5 9.5 3.5 7.5 3.5C5 3.5 3.5 5.5 3.5 7.5C3.5 10 5.5 11.5 7.5 11.5C8.5 11.5 9 11.3 9.5 11" fill="none" stroke="#333" stroke-width="1"/></svg>
<div class="t" style="left:1725px;top:64px;letter-spacing:0.121px;">HopeSpringBootApplicatic</div>
<svg class="a" style="left:1887px;top:67px;" width="13" height="8" viewBox="0 0 13 8"><path d="M1 1L6.5 6.5L12 1" fill="none" stroke="#555" stroke-width="1.4"/></svg>
<svg class="a" style="left:1866px;top:215px;" width="62" height="62" viewBox="0 0 62 62"><defs><clipPath id="cb"><circle cx="31" cy="31" r="30"/></clipPath><linearGradient id="fl" x1="0" y1="0" x2="0" y2="1"><stop offset="0" stop-color="#e8682a"/><stop offset="1" stop-color="#f6b03a"/></linearGradient></defs>
<circle cx="31" cy="31" r="30" fill="#3e4658" fill-opacity="0.88"/>
<g clip-path="url(#cb)"><path d="M4 33C4 24 8 20 12 14C13 18 14 20 16 21C16 14 20 8 26 1C25 8 28 12 30 14C31 9 34 5 38 2C37 8 40 12 44 16C46 13 48 11 50 9C50 15 54 20 58 26C58 29 58 31 58 33Z" fill="url(#fl)"/>
<path d="M14 33C13 28 16 24 19 21C19 26 21 28 24 29C22 22 26 16 29 10C29 17 33 22 35 28C37 25 39 22 42 20C42 25 45 29 46 33Z" fill="#f5d45a" fill-opacity="0.8"/></g></svg>
<div class="t" style="left:1873px;top:248px;font-size:15px;line-height:18px;color:#e3d83a">591<span style="font-size:12px;letter-spacing:0.5px;margin-left:1px">MB</span></div>
<div class="a" style="left:30px;top:58px;width:349px;height:26px;background:#f2f2f2;"></div>
<div class="a" style="left:30px;top:84px;width:349px;height:1px;background:#d1d1d1;"></div>
<div class="a" style="left:30px;top:85px;width:349px;height:591px;background:#ffffff;"></div>
<div class="a" style="left:379px;top:58px;width:1px;height:618px;background:#d1d1d1;"></div>
<svg class="a" style="left:38px;top:64px;" width="15" height="14" viewBox="0 0 15 14"><rect x="0.5" y="0.5" width="14" height="13" fill="#fff" stroke="#9aa7b0"/><rect x="2" y="3" width="11" height="9" fill="#87c7dd"/></svg>
<div class="t" style="left:58px;top:63px;">Project</div>
<svg class="a" style="left:106px;top:69px;" width="9" height="6" viewBox="0 0 9 6"><path d="M0 0H9L4.5 6Z" fill="#777"/></svg>
<svg class="a" style="left:273px;top:63px;" width="16" height="16" viewBox="0 0 16 16"><circle cx="8" cy="8" r="6.3" fill="none" stroke="#6e6e6e" stroke-width="1.4"/><path d="M8 1.5V5.5M8 10.5V14.5M1.5 8H5.5M10.5 8H14.5" stroke="#6e6e6e" stroke-width="1.4"/></svg>
<svg class="a" style="left:299px;top:64px;" width="15" height="14" viewBox="0 0 15 14"><path d="M1 7H14" stroke="#6e6e6e" stroke-width="1.4"/><path d="M4 1H11L7.5 5Z M4 13H11L7.5 9Z" fill="#6e6e6e"/></svg>
<div class="a" style="left:323px;top:61px;width:1px;height:20px;background:#d0d0d0;"></div>
<svg class="a" style="left:333px;top:64px;" width="14" height="14" viewBox="0 0 14 14"><g transform="scale(1.0)"><path d="M6 0.5H8L8.4 2.4L9.8 3L11.4 1.9L12.8 3.3L11.7 4.9L12.3 6.3L14 6.7V8.7L12.3 9.1L11.7 10.5L12.8 12.1L11.4 13.5L9.8 12.4L8.4 13L8 14H6L5.6 13L4.2 12.4L2.6 13.5L1.2 12.1L2.3 10.5L1.7 9.1L0 8.7V6.7L1.7 6.3L2.3 4.9L1.2 3.3L2.6 1.9L4.2 3L5.6 2.4Z" fill="#6e6e6e"/><circle cx="7" cy="7.5" r="2.2" fill="#f2f2f2"/></g></svg>
<div class="a" style="left:360px;top:70px;width:12px;height:2px;background:#6e6e6e;"></div>
<div class="a" style="left:30px;top:386px;width:349px;height:20px;background:#d5d5d5;"></div>
<div class="a" style="left:30px;top:545px;width:349px;height:20px;background:#fbfbe7;"></div>
<div class="a" style="left:30px;top:585px;width:349px;height:20px;background:#fbfbe7;"></div>
<svg class="a" style="left:33px;top:91px;" width="10" height="8" viewBox="0 0 10 8"><path d="M0 0H9L4.5 8Z" fill="#a6a6a6"/></svg>
<svg class="a" style="left:50px;top:89px;" width="16" height="15" viewBox="0 0 16 15"><path d="M0 1H6L7 3H14V11H0Z" fill="#9aa7b0"/><rect x="9" y="8" width="6" height="6" fill="#40b6e0" stroke="#fff" stroke-width="0.6"/></svg>
<div class="t" style="left:70px;top:88px;;width:309px;overflow:hidden"><b>Hopehomi-Tool</b>  <span style="color:#7a7a7a">E:\idea-workspace\hopehomi\Hopehomi-Tool</span></div>
<svg class="a" style="left:51px;top:110px;" width="8" height="10" viewBox="0 0 8 10"><path d="M0 0L8 4.5L0 9Z" fill="#a6a6a6"/></svg>
<svg class="a" style="left:69px;top:109px;" width="16" height="15" viewBox="0 0 16 15"><path d="M0 1H6L7 3H14V11H0Z" fill="#9aa7b0"/></svg>
<div class="t" style="left:87px;top:108px;color:#8c7f3c;width:292px;overflow:hidden">.idea</div>
<svg class="a" style="left:51px;top:130px;" width="8" height="10" viewBox="0 0 8 10"><path d="M0 0L8 4.5L0 9Z" fill="#a6a6a6"/></svg>
<svg class="a" style="left:69px;top:129px;" width="16" height="15" viewBox="0 0 16 15"><path d="M0 1H6L7 3H14V11H0Z" fill="#9aa7b0"/><rect x="9" y="8" width="6" height="6" fill="#40b6e0" stroke="#fff" stroke-width="0.6"/></svg>
<div class="t" style="left:87px;top:128px;;width:292px;overflow:hidden"><b>hope-bom</b></div>
<svg class="a" style="left:51px;top:150px;" width="8" height="10" viewBox="0 0 8 10"><path d="M0 0L8 4.5L0 9Z" fill="#a6a6a6"/></svg>
<svg class="a" style="left:69px;top:149px;" width="16" height="15" viewBox="0 0 16 15"><path d="M0 1H6L7 3H14V11H0Z" fill="#9aa7b0"/><rect x="9" y="8" width="6" height="6" fill="#40b6e0" stroke="#fff" stroke-width="0.6"/></svg>
<div class="t" style="left:87px;top:148px;;width:292px;overflow:hidden"><b>hope-core-base</b></div>
<svg class="a" style="left:51px;top:170px;" width="8" height="10" viewBox="0 0 8 10"><path d="M0 0L8 4.5L0 9Z" fill="#a6a6a6"/></svg>
<svg class="a" style="left:69px;top:169px;" width="16" height="15" viewBox="0 0 16 15"><path d="M0 1H6L7 3H14V11H0Z" fill="#9aa7b0"/><rect x="9" y="8" width="6" height="6" fill="#40b6e0" stroke="#fff" stroke-width="0.6"/></svg>
<div class="t" style="left:87px;top:168px;;width:292px;overflow:hidden"><b>hope-core-boot</b></div>
<svg class="a" style="left:51px;top:190px;" width="8" height="10" viewBox="0 0 8 10"><path d="M0 0L8 4.5L0 9Z" fill="#a6a6a6"/></svg>
<svg class="a" style="left:69px;top:189px;" width="16" height="15" viewBox="0 0 16 15"><path d="M0 1H6L7 3H14V11H0Z" fill="#9aa7b0"/><rect x="9" y="8" width="6" height="6" fill="#40b6e0" stroke="#fff" stroke-width="0.6"/></svg>
<div class="t" style="left:87px;top:188px;;width:292px;overflow:hidden"><b>hope-core-cloud</b></div>
<svg class="a" style="left:51px;top:210px;" width="8" height="10" viewBox="0 0 8 10"><path d="M0 0L8 4.5L0 9Z" fill="#a6a6a6"/></svg>
<svg class="a" style="left:69px;top:209px;" width="16" height="15" viewBox="0 0 16 15"><path d="M0 1H6L7 3H14V11H0Z" fill="#9aa7b0"/><rect x="9" y="8" width="6" height="6" fill="#40b6e0" stroke="#fff" stroke-width="0.6"/></svg>
<div class="t" style="left:87px;top:208px;;width:292px;overflow:hidden"><b>hope-core-database</b></div>
<svg class="a" style="left:51px;top:230px;" width="8" height="10" viewBox="0 0 8 10"><path d="M0 0L8 4.5L0 9Z" fill="#a6a6a6"/></svg>
<svg class="a" style="left:69px;top:229px;" width="16" height="15" viewBox="0 0 16 15"><path d="M0 1H6L7 3H14V11H0Z" fill="#9aa7b0"/><rect x="9" y="8" width="6" height="6" fill="#40b6e0" stroke="#fff" stroke-width="0.6"/></svg>
<div class="t" style="left:87px;top:228px;;width:292px;overflow:hidden"><b>hope-core-log</b></div>
<svg class="a" style="left:51px;top:250px;" width="8" height="10" viewBox="0 0 8 10"><path d="M0 0L8 4.5L0 9Z" fill="#a6a6a6"/></svg>
<svg class="a" style="left:69px;top:249px;" width="16" height="15" viewBox="0 0 16 15"><path d="M0 1H6L7 3H14V11H0Z" fill="#9aa7b0"/><rect x="9" y="8" width="6" height="6" fill="#40b6e0" stroke="#fff" stroke-width="0.6"/></svg>
<div class="t" style="left:87px;top:248px;;width:292px;overflow:hidden"><b>hope-core-swagger</b></div>
<svg class="a" style="left:51px;top:270px;" width="8" height="10" viewBox="0 0 8 10"><path d="M0 0L8 4.5L0 9Z" fill="#a6a6a6"/></svg>
<svg class="a" style="left:69px;top:269px;" width="16" height="15" viewBox="0 0 16 15"><path d="M0 1H6L7 3H14V11H0Z" fill="#9aa7b0"/><rect x="9" y="8" width="6" height="6" fill="#40b6e0" stroke="#fff" stroke-width="0.6"/></svg>
<div class="t" style="left:87px;top:268px;;width:292px;overflow:hidden"><b>hope-core-tool</b></div>
<svg class="a" style="left:51px;top:291px;" width="10" height="8" viewBox="0 0 10 8"><path d="M0 0H9L4.5 8Z" fill="#a6a6a6"/></svg>
<svg class="a" style="left:69px;top:289px;" width="16" height="15" viewBox="0 0 16 15"><path d="M0 1H6L7 3H14V11H0Z" fill="#9aa7b0"/><rect x="9" y="8" width="6" height="6" fill="#40b6e0" stroke="#fff" stroke-width="0.6"/></svg>
<div class="t" style="left:87px;top:288px;;width:292px;overflow:hidden"><b>hope-demo-boot</b></div>
<svg class="a" style="left:69px;top:311px;" width="10" height="8" viewBox="0 0 10 8"><path d="M0 0H9L4.5 8Z" fill="#a6a6a6"/></svg>
<svg class="a" style="left:87px;top:309px;" width="16" height="15" viewBox="0 0 16 15"><path d="M0 1H6L7 3H14V11H0Z" fill="#9aa7b0"/></svg>
<div class="t" style="left:105px;top:308px;;width:274px;overflow:hidden">src</div>
<svg class="a" style="left:87px;top:331px;" width="10" height="8" viewBox="0 0 10 8"><path d="M0 0H9L4.5 8Z" fill="#a6a6a6"/></svg>
<svg class="a" style="left:105px;top:329px;" width="16" height="15" viewBox="0 0 16 15"><path d="M0 1H6L7 3H14V11H0Z" fill="#9aa7b0"/></svg>
<div class="t" style="left:123px;top:328px;;width:256px;overflow:hidden">main</div>
<svg class="a" style="left:105px;top:351px;" width="10" height="8" viewBox="0 0 10 8"><path d="M0 0H9L4.5 8Z" fill="#a6a6a6"/></svg>
<svg class="a" style="left:123px;top:349px;" width="16" height="15" viewBox="0 0 16 15"><path d="M0 1H6L7 3H14V11H0Z" fill="#87c7dd"/></svg>
<div class="t" style="left:141px;top:348px;;width:238px;overflow:hidden">java</div>
<svg class="a" style="left:123px;top:371px;" width="10" height="8" viewBox="0 0 10 8"><path d="M0 0H9L4.5 8Z" fill="#a6a6a6"/></svg>
<svg class="a" style="left:141px;top:369px;" width="16" height="15" viewBox="0 0 16 15"><path d="M0 1H6L7 3H14V11H0Z" fill="#9aa7b0"/><circle cx="7" cy="7" r="1.6" fill="#fff"/></svg>
<div class="t" style="left:159px;top:368px;;width:220px;overflow:hidden">org.hopehomi.boot</div>
<svg class="a" style="left:141px;top:391px;" width="10" height="8" viewBox="0 0 10 8"><path d="M0 0H9L4.5 8Z" fill="#a6a6a6"/></svg>
<svg class="a" style="left:159px;top:389px;" width="16" height="15" viewBox="0 0 16 15"><path d="M0 1H6L7 3H14V11H0Z" fill="#9aa7b0"/><circle cx="7" cy="7" r="1.6" fill="#fff"/></svg>
<div class="t" style="left:177px;top:388px;;width:202px;overflow:hidden">config</div>
<svg class="a" style="left:177px;top:408px;" width="16" height="16" viewBox="0 0 16 16"><circle cx="7" cy="7.5" r="7" fill="#86c7de"/><path d="M9.2 5.8A2.6 2.6 0 1 0 9.2 9.2" fill="none" stroke="#3c3c3c" stroke-width="1.2"/></svg>
<div class="t" style="left:195px;top:408px;;width:184px;overflow:hidden">IgoreModel</div>
<svg class="a" style="left:177px;top:428px;" width="16" height="16" viewBox="0 0 16 16"><circle cx="7" cy="7.5" r="7" fill="#86c7de"/><path d="M9.2 5.8A2.6 2.6 0 1 0 9.2 9.2" fill="none" stroke="#3c3c3c" stroke-width="1.2"/></svg>
<div class="t" style="left:195px;top:428px;;width:184px;overflow:hidden">MyConfig</div>
<svg class="a" style="left:141px;top:450px;" width="8" height="10" viewBox="0 0 8 10"><path d="M0 0L8 4.5L0 9Z" fill="#a6a6a6"/></svg>
<svg class="a" style="left:159px;top:449px;" width="16" height="15" viewBox="0 0 16 15"><path d="M0 1H6L7 3H14V11H0Z" fill="#9aa7b0"/><circle cx="7" cy="7" r="1.6" fill="#fff"/></svg>
<div class="t" style="left:177px;top:448px;;width:202px;overflow:hidden">controller</div>
<svg class="a" style="left:141px;top:470px;" width="8" height="10" viewBox="0 0 8 10"><path d="M0 0L8 4.5L0 9Z" fill="#a6a6a6"/></svg>
<svg class="a" style="left:159px;top:469px;" width="16" height="15" viewBox="0 0 16 15"><path d="M0 1H6L7 3H14V11H0Z" fill="#9aa7b0"/><circle cx="7" cy="7" r="1.6" fill="#fff"/></svg>
<div class="t" style="left:177px;top:468px;;width:202px;overflow:hidden">model</div>
<svg class="a" style="left:159px;top:486px;" width="17" height="17" viewBox="0 0 17 17"><circle cx="7.5" cy="9" r="7" fill="#87c7dd"/><path d="M9.5 7A3 3 0 1 0 9.5 11" fill="none" stroke="#3a3a3a" stroke-width="1.3"/><path d="M10 0L16 4L10 8Z" fill="#4fae5c"/><circle cx="11" cy="13" r="3.3" fill="#9aa7b0" stroke="#f2f2f2" stroke-width="0.8"/></svg>
<div class="t" style="left:177px;top:488px;color:#2f3fb8;width:202px;overflow:hidden">DemoBootApplication</div>
<svg class="a" style="left:105px;top:510px;" width="8" height="10" viewBox="0 0 8 10"><path d="M0 0L8 4.5L0 9Z" fill="#a6a6a6"/></svg>
<svg class="a" style="left:123px;top:509px;" width="16" height="15" viewBox="0 0 16 15"><path d="M0 1H6L7 3H14V11H0Z" fill="#9aa7b0"/><path d="M9.5 8.5H14M9.5 10.5H14M9.5 12.5H14" stroke="#e09a3a" stroke-width="1.1"/></svg>
<div class="t" style="left:141px;top:508px;;width:238px;overflow:hidden">resources</div>
<svg class="a" style="left:87px;top:530px;" width="8" height="10" viewBox="0 0 8 10"><path d="M0 0L8 4.5L0 9Z" fill="#a6a6a6"/></svg>
<svg class="a" style="left:105px;top:529px;" width="16" height="15" viewBox="0 0 16 15"><path d="M0 1H6L7 3H14V11H0Z" fill="#9aa7b0"/></svg>
<div class="t" style="left:123px;top:528px;;width:256px;overflow:hidden">test</div>
<svg class="a" style="left:69px;top:550px;" width="8" height="10" viewBox="0 0 8 10"><path d="M0 0L8 4.5L0 9Z" fill="#a6a6a6"/></svg>
<svg class="a" style="left:87px;top:549px;" width="16" height="15" viewBox="0 0 16 15"><path d="M0 1H6L7 3H14V11H0Z" fill="#f4a466"/></svg>
<div class="t" style="left:105px;top:548px;color:#8c7f3c;width:274px;overflow:hidden">target</div>
<div class="t" style="left:87px;top:566px;font:italic bold 17px 'Liberation Sans';color:#5eb3d9;line-height:18px">m</div>
<div class="t" style="left:105px;top:568px;;width:274px;overflow:hidden">pom.xml</div>
<svg class="a" style="left:51px;top:590px;" width="8" height="10" viewBox="0 0 8 10"><path d="M0 0L8 4.5L0 9Z" fill="#a6a6a6"/></svg>
<svg class="a" style="left:69px;top:589px;" width="16" height="15" viewBox="0 0 16 15"><path d="M0 1H6L7 3H14V11H0Z" fill="#f4a466"/></svg>
<div class="t" style="left:87px;top:588px;color:#8c7f3c;width:292px;overflow:hidden">target</div>
<svg class="a" style="left:69px;top:607px;" width="16" height="16" viewBox="0 0 16 16"><path d="M3 1H9L12 4V14H3Z" fill="#9aa7b0"/><path d="M5 6H10M5 8H10M5 10H10" stroke="#fff" stroke-width="0.8"/><circle cx="11" cy="12" r="3" fill="#fff"/><circle cx="11" cy="12" r="2.2" fill="none" stroke="#666" stroke-width="0.9"/><path d="M9.5 13.5L12.5 10.5" stroke="#666" stroke-width="0.9"/></svg>
<div class="t" style="left:87px;top:608px;;width:292px;overflow:hidden">.gitignore</div>
<svg class="a" style="left:69px;top:627px;" width="16" height="16" viewBox="0 0 16 16"><path d="M3 1H9L12 4V14H3Z" fill="#9aa7b0"/><path d="M5 6H10M5 8H10M5 10H10" stroke="#fff" stroke-width="0.8"/><rect x="9" y="10" width="5" height="4" fill="#222"/></svg>
<div class="t" style="left:87px;top:628px;color:#8c7f3c;width:292px;overflow:hidden">Hopehomi-Tool.iml</div>
<svg class="a" style="left:69px;top:647px;" width="16" height="16" viewBox="0 0 16 16"><path d="M3 1H9L12 4V14H3Z" fill="#9aa7b0"/><path d="M5 6H10M5 8H10M5 10H10" stroke="#fff" stroke-width="0.8"/></svg>
<div class="t" style="left:87px;top:648px;;width:292px;overflow:hidden">LICENSE</div>
<div class="t" style="left:87px;top:666px;font:italic bold 17px 'Liberation Sans';color:#5eb3d9;line-height:18px">m</div>
<div class="t" style="left:105px;top:668px;color:#2f3fb8;width:274px;overflow:hidden">pom.xml</div>
<div class="a" style="left:369px;top:85px;width:10px;height:515px;background:rgba(0,0,0,0.13);"></div>
<div class="a" style="left:30px;top:665px;width:273px;height:11px;background:#dedede;"></div>
<div class="a" style="left:30px;top:675px;width:1877px;height:1px;background:#c9c9c9;"></div>
<div class="a" style="left:30px;top:676px;width:1877px;height:26px;background:#f2f2f2;"></div>
<div class="a" style="left:30px;top:702px;width:1877px;height:1px;background:#d1d1d1;"></div>
<div class="t" style="left:36px;top:682px;">Services</div>
<svg class="a" style="left:1827px;top:681px;" width="16" height="16" viewBox="0 0 16 16"><circle cx="8" cy="8" r="6.3" fill="none" stroke="#6e6e6e" stroke-width="1.4"/><path d="M8 1.5V5.5M8 10.5V14.5M1.5 8H5.5M10.5 8H14.5" stroke="#6e6e6e" stroke-width="1.4"/></svg>
<div class="a" style="left:1851px;top:680px;width:1px;height:18px;background:#d0d0d0;"></div>
<svg class="a" style="left:1861px;top:682px;" width="14" height="14" viewBox="0 0 14 14"><g transform="scale(1.0)"><path d="M6 0.5H8L8.4 2.4L9.8 3L11.4 1.9L12.8 3.3L11.7 4.9L12.3 6.3L14 6.7V8.7L12.3 9.1L11.7 10.5L12.8 12.1L11.4 13.5L9.8 12.4L8.4 13L8 14H6L5.6 13L4.2 12.4L2.6 13.5L1.2 12.1L2.3 10.5L1.7 9.1L0 8.7V6.7L1.7 6.3L2.3 4.9L1.2 3.3L2.6 1.9L4.2 3L5.6 2.4Z" fill="#6e6e6e"/><circle cx="7" cy="7.5" r="2.2" fill="#f2f2f2"/></g></svg>
<div class="a" style="left:1888px;top:688px;width:12px;height:2px;background:#6e6e6e;"></div>
<div class="a" style="left:30px;top:703px;width:28px;height:294px;background:#f2f2f2;"></div>
<div class="a" style="left:58px;top:703px;width:1px;height:294px;background:#d1d1d1;"></div>
<svg class="a" style="left:37px;top:710px;" width="15" height="15" viewBox="0 0 15 15"><path d="M12 7A5 5 0 1 1 8 2.2" fill="none" stroke="#4fae5c" stroke-width="1.8"/><path d="M7 0L11 2.5L7 5Z" fill="#4fae5c"/><rect x="8" y="9" width="5" height="5" fill="#555"/></svg>
<svg class="a" style="left:37px;top:736px;" width="16" height="16" viewBox="0 0 16 16"><path d="M4 1L6 3.5M10 1L8 3.5" stroke="#59a869" stroke-width="1.5"/><ellipse cx="7" cy="4.8" rx="3" ry="2" fill="#59a869"/><ellipse cx="7" cy="10" rx="4.6" ry="5" fill="#59a869"/><rect x="0" y="6" width="3" height="1.7" fill="#59a869"/><rect x="0" y="9.3" width="3" height="1.7" fill="#59a869"/><rect x="0" y="12.6" width="3" height="1.7" fill="#59a869"/><rect x="11" y="6" width="3" height="1.7" fill="#59a869"/><rect x="11" y="9.3" width="3" height="1.7" fill="#59a869"/><rect x="11" y="12.6" width="3" height="1.7" fill="#59a869"/><rect x="4" y="8" width="6" height="1.3" fill="#f2f2f2"/><rect x="4" y="11.4" width="6" height="1.3" fill="#f2f2f2"/></svg>
<div class="a" style="left:46px;top:746px;width:6px;height:6px;background:#555;"></div>
<div class="a" style="left:39px;top:765px;width:10px;height:10px;background:#db5860;"></div>
<div class="a" style="left:34px;top:785px;width:21px;height:1px;background:#d6d6d6;"></div>
<svg class="a" style="left:38px;top:796px;" width="13" height="12" viewBox="0 0 13 12"><rect x="0" y="0" width="2.5" height="12" fill="#4fae5c"/><path d="M4 0L12 6L4 12Z" fill="#4fae5c"/></svg>
<svg class="a" style="left:39px;top:822px;" width="10" height="12" viewBox="0 0 10 12"><rect x="0" y="0" width="3" height="12" fill="#b0b0b0"/><rect x="6" y="0" width="3" height="12" fill="#b0b0b0"/></svg>
<div class="a" style="left:34px;top:845px;width:21px;height:1px;background:#d6d6d6;"></div>
<svg class="a" style="left:37px;top:853px;" width="15" height="15" viewBox="0 0 15 15"><circle cx="5" cy="9.5" r="4.5" fill="#db5860"/><circle cx="10" cy="5" r="4" fill="#db5860" stroke="#f2f2f2" stroke-width="1"/></svg>
<svg class="a" style="left:37px;top:880px;" width="15" height="15" viewBox="0 0 15 15"><circle cx="7" cy="8" r="5" fill="#db5860"/><path d="M1 14L13 2" stroke="#6e6e6e" stroke-width="1.4"/></svg>
<div class="a" style="left:34px;top:905px;width:21px;height:1px;background:#d6d6d6;"></div>
<svg class="a" style="left:37px;top:914px;" width="15" height="14" viewBox="0 0 15 14"><path d="M1 4H4L5.5 2H9.5L11 4H14V13H1Z" fill="#6e6e6e"/><circle cx="7.5" cy="8.5" r="2.6" fill="#f2f2f2"/><circle cx="7.5" cy="8.5" r="1.3" fill="#6e6e6e"/></svg>
<div class="a" style="left:34px;top:937px;width:21px;height:1px;background:#d6d6d6;"></div>
<svg class="a" style="left:37px;top:947px;" width="15" height="12" viewBox="0 0 15 12"><rect x="1" y="1" width="6" height="4" fill="#6e6e6e"/><rect x="8" y="1" width="6" height="4" fill="#6e6e6e"/><rect x="1" y="6.5" width="13" height="4.5" fill="#6e6e6e"/></svg>
<svg class="a" style="left:37px;top:973px;" width="13" height="13" viewBox="0 0 13 13"><g transform="scale(0.9285714285714286)"><path d="M6 0.5H8L8.4 2.4L9.8 3L11.4 1.9L12.8 3.3L11.7 4.9L12.3 6.3L14 6.7V8.7L12.3 9.1L11.7 10.5L12.8 12.1L11.4 13.5L9.8 12.4L8.4 13L8 14H6L5.6 13L4.2 12.4L2.6 13.5L1.2 12.1L2.3 10.5L1.7 9.1L0 8.7V6.7L1.7 6.3L2.3 4.9L1.2 3.3L2.6 1.9L4.2 3L5.6 2.4Z" fill="#6e6e6e"/><circle cx="7" cy="7.5" r="2.2" fill="#f2f2f2"/></g></svg>
<svg class="a" style="left:48px;top:984px;" width="6" height="4" viewBox="0 0 6 4"><path d="M0 0H6L3 4Z" fill="#333"/></svg>
<div class="a" style="left:59px;top:703px;width:297px;height:27px;background:#f2f2f2;"></div>
<div class="a" style="left:59px;top:730px;width:297px;height:1px;background:#d1d1d1;"></div>
<svg class="a" style="left:65px;top:709px;" width="14" height="14" viewBox="0 0 14 14"><path d="M1 1H13M1 13H13" stroke="#6e6e6e" stroke-width="1.4"/><path d="M4 6L7 3L10 6Z M4 8L7 11L10 8Z" fill="#6e6e6e"/></svg>
<svg class="a" style="left:91px;top:709px;" width="14" height="14" viewBox="0 0 14 14"><path d="M1 7H13" stroke="#6e6e6e" stroke-width="1.4"/><path d="M4 2H10L7 5Z M4 12H10L7 9Z" fill="#6e6e6e"/></svg>
<div class="a" style="left:114px;top:708px;width:1px;height:18px;background:#d0d0d0;"></div>
<svg class="a" style="left:124px;top:709px;" width="15" height="15" viewBox="0 0 15 15"><rect x="1" y="1" width="4" height="4" fill="#6e6e6e"/><rect x="7" y="1" width="4" height="4" fill="#6e6e6e"/><rect x="1" y="7" width="4" height="4" fill="#6e6e6e"/><rect x="7" y="7" width="4" height="4" fill="#6e6e6e"/><path d="M9 12H15L12 15Z" fill="#333"/></svg>
<svg class="a" style="left:150px;top:709px;" width="15" height="15" viewBox="0 0 15 15"><path d="M0 1H12L7.5 6V12H4.5V6Z" fill="#6e6e6e"/><path d="M9 12H15L12 15Z" fill="#333"/></svg>
<svg class="a" style="left:175px;top:709px;" width="16" height="14" viewBox="0 0 16 14"><path d="M1 14V4C1 2 2 1 4 1H12C14 1 15 2 15 4V14" fill="none" stroke="#6e6e6e" stroke-width="1.2"/><path d="M8 4V11M4.5 7.5H11.5" stroke="#6e6e6e" stroke-width="1.4"/></svg>
<div class="a" style="left:199px;top:708px;width:1px;height:18px;background:#d0d0d0;"></div>
<svg class="a" style="left:210px;top:709px;" width="15" height="15" viewBox="0 0 15 15"><path d="M6 1V11M1 6H11" stroke="#6e6e6e" stroke-width="1.6"/><path d="M9 12H15L12 15Z" fill="#333"/></svg>
<div class="a" style="left:59px;top:731px;width:297px;height:266px;background:#ffffff;"></div>
<div class="a" style="left:355px;top:703px;width:1px;height:294px;background:#d1d1d1;"></div>
<div class="a" style="left:59px;top:772px;width:296px;height:20px;background:#d5d5d5;"></div>
<svg class="a" style="left:62px;top:738px;" width="10" height="8" viewBox="0 0 10 8"><path d="M0 0H9L4.5 8Z" fill="#a6a6a6"/></svg>
<svg class="a" style="left:80px;top:734px;" width="16" height="16" viewBox="0 0 16 16"><path d="M0.5 10C0.5 6 3.5 3.8 7.5 3.6C10 3.5 12 2.8 13.5 0.8C14.2 4.5 13 8 10.3 10.2C7.8 12.2 4 13 1.5 12.5C3 11.5 4.5 10.6 6.5 9.6C4.5 10.2 2.3 10.6 0.5 10Z" fill="#7fc27f"/><path d="M11 6.3L14.8 8.5V12.8L11 15L7.2 12.8V8.5Z" fill="#9aa7b0" stroke="#fff" stroke-width="0.7"/><circle cx="11" cy="10.6" r="2" fill="none" stroke="#fff" stroke-width="0.8"/></svg>
<div class="t" style="left:98px;top:734px;">Spring Boot</div>
<svg class="a" style="left:80px;top:758px;" width="10" height="8" viewBox="0 0 10 8"><path d="M0 0H9L4.5 8Z" fill="#a6a6a6"/></svg>
<svg class="a" style="left:100px;top:756px;" width="11" height="12" viewBox="0 0 11 12"><path d="M0 0L11 6L0 12Z" fill="#4fae5c"/></svg>
<div class="t" style="left:116px;top:754px;">Running</div>
<svg class="a" style="left:116px;top:775px;" width="16" height="16" viewBox="0 0 16 16"><path d="M4 1L6 3.5M10 1L8 3.5" stroke="#59a869" stroke-width="1.5"/><ellipse cx="7" cy="4.8" rx="3" ry="2" fill="#59a869"/><ellipse cx="7" cy="10" rx="4.6" ry="5" fill="#59a869"/><rect x="0" y="6" width="3" height="1.7" fill="#59a869"/><rect x="0" y="9.3" width="3" height="1.7" fill="#59a869"/><rect x="0" y="12.6" width="3" height="1.7" fill="#59a869"/><rect x="11" y="6" width="3" height="1.7" fill="#59a869"/><rect x="11" y="9.3" width="3" height="1.7" fill="#59a869"/><rect x="11" y="12.6" width="3" height="1.7" fill="#59a869"/><rect x="4" y="8" width="6" height="1.3" fill="#d5d5d5"/><rect x="4" y="11.4" width="6" height="1.3" fill="#d5d5d5"/></svg>
<div class="t" style="left:134px;top:774px;font-weight:bold">DemoBootApplication-test</div>
<svg class="a" style="left:80px;top:798px;" width="10" height="8" viewBox="0 0 10 8"><path d="M0 0H9L4.5 8Z" fill="#a6a6a6"/></svg>
<svg class="a" style="left:98px;top:794px;" width="15" height="16" viewBox="0 0 15 16"><path d="M11 6A4.5 4.5 0 1 0 7 11.5" fill="none" stroke="#4fae5c" stroke-width="1.8"/><path d="M8 0L12 3L8 6Z" fill="#4fae5c"/><rect x="9" y="10" width="5" height="5" fill="#555"/></svg>
<div class="t" style="left:116px;top:794px;">Finished</div>
<svg class="a" style="left:116px;top:814px;" width="16" height="16" viewBox="0 0 16 16"><path d="M0.5 10C0.5 6 3.5 3.8 7.5 3.6C10 3.5 12 2.8 13.5 0.8C14.2 4.5 13 8 10.3 10.2C7.8 12.2 4 13 1.5 12.5C3 11.5 4.5 10.6 6.5 9.6C4.5 10.2 2.3 10.6 0.5 10Z" fill="#7fc27f"/><path d="M11 6.3L14.8 8.5V12.8L11 15L7.2 12.8V8.5Z" fill="#9aa7b0" stroke="#fff" stroke-width="0.7"/><circle cx="11" cy="10.6" r="2" fill="none" stroke="#fff" stroke-width="0.8"/></svg>
<div class="t" style="left:134px;top:814px;font-weight:bold">DemoBootApplication-test</div>
<div class="t" style="left:134px;top:834px;font-weight:bold;color:#808080">DemoBootApplication</div>
<div class="a" style="left:356px;top:703px;width:1551px;height:27px;background:#f2f2f2;"></div>
<div class="a" style="left:356px;top:730px;width:1551px;height:1px;background:#d1d1d1;"></div>
<div class="t" style="left:369px;top:710px;letter-spacing:-0.5px">Debugger</div>
<div class="a" style="left:356px;top:729px;width:78px;height:2px;background:#8396b8;"></div>
<svg class="a" style="left:446px;top:709px;" width="15" height="15" viewBox="0 0 15 15"><rect x="0" y="1" width="12" height="11" fill="#6e6e6e"/><path d="M2.5 4L5.5 6.5L2.5 9" fill="none" stroke="#fff" stroke-width="1.3"/><circle cx="11" cy="11" r="4" fill="#f0a030"/><path d="M11 8.5V13M9 11.5L11 13.5L13 11.5" fill="none" stroke="#555" stroke-width="1"/></svg>
<div class="t" style="left:465px;top:710px;letter-spacing:-0.6px">Console</div>
<svg class="a" style="left:527px;top:708px;" width="16" height="16" viewBox="0 0 16 16"><circle cx="8" cy="2.5" r="2.2" fill="#e8906a"/><circle cx="2.5" cy="13" r="2.2" fill="#e8906a"/><circle cx="13.5" cy="13" r="2.2" fill="#e8906a"/><path d="M8 3L3 12M8 3L13 12M8 3V9" stroke="#e8906a" stroke-width="1.4"/></svg>
<div class="t" style="left:547px;top:710px;letter-spacing:-0.5px">Endpoints</div>
<svg class="a" style="left:614px;top:710px;" width="14" height="12" viewBox="0 0 14 12"><path d="M0 1.5H14M0 6H14M0 10.5H14" stroke="#555" stroke-width="2"/><path d="M0 6H14" stroke="#3592c4" stroke-width="2"/></svg>
<div class="a" style="left:637px;top:708px;width:1px;height:18px;background:#d0d0d0;"></div>
<svg class="a" style="left:646px;top:709px;" width="16" height="15" viewBox="0 0 16 15"><path d="M2 9C2 3 12 2 13 8" fill="none" stroke="#3592c4" stroke-width="1.6"/><path d="M10 6L14 9L15 5Z" fill="#3592c4"/><path d="M1 13H15" stroke="#555" stroke-width="1.6"/></svg>
<svg class="a" style="left:673px;top:709px;" width="14" height="15" viewBox="0 0 14 15"><path d="M7 0V8" stroke="#3592c4" stroke-width="1.6"/><path d="M3 6L7 10L11 6Z" fill="#3592c4"/><path d="M0 13H14" stroke="#555" stroke-width="1.6"/></svg>
<svg class="a" style="left:699px;top:709px;" width="14" height="15" viewBox="0 0 14 15"><path d="M7 0V8" stroke="#db5860" stroke-width="1.6"/><path d="M3 6L7 10L11 6Z" fill="#db5860"/><path d="M0 13H14" stroke="#555" stroke-width="1.6"/></svg>
<svg class="a" style="left:725px;top:709px;" width="14" height="15" viewBox="0 0 14 15"><path d="M7 11V3" stroke="#3592c4" stroke-width="1.6"/><path d="M3 5L7 1L11 5Z" fill="#3592c4"/><path d="M0 13H14" stroke="#555" stroke-width="1.6"/></svg>
<svg class="a" style="left:751px;top:709px;" width="15" height="15" viewBox="0 0 15 15"><path d="M1 1L6 6M6 1L1 6" stroke="#db5860" stroke-width="1.6"/><path d="M6 5H13V13H5V9" fill="none" stroke="#555" stroke-width="1.4"/></svg>
<svg class="a" style="left:777px;top:709px;" width="15" height="16" viewBox="0 0 15 16"><path d="M1 1L8 8" stroke="#3592c4" stroke-width="1.6"/><path d="M4 9H9V4Z" fill="#3592c4"/><path d="M11 6V15M9.5 6H12.5M9.5 15H12.5" stroke="#555" stroke-width="1"/></svg>
<div class="a" style="left:800px;top:708px;width:1px;height:18px;background:#d0d0d0;"></div>
<svg class="a" style="left:810px;top:709px;" width="14" height="14" viewBox="0 0 14 14"><rect x="0.7" y="0.7" width="12.6" height="12.6" fill="none" stroke="#555" stroke-width="1.4"/><path d="M1 4.5H13M1 8H13M4.5 4.5V13M8.5 4.5V13" stroke="#555" stroke-width="1.2"/></svg>
<svg class="a" style="left:836px;top:710px;" width="14" height="12" viewBox="0 0 14 12"><path d="M0 2H5L8 6L5 10H0M14 2H9M14 10H9M7 6H14" fill="none" stroke="#c4c4c4" stroke-width="1.3"/></svg>
<svg class="a" style="left:1888px;top:711px;" width="15" height="15" viewBox="0 0 15 15"><rect x="0" y="0" width="6" height="5" fill="#555"/><rect x="7" y="0" width="6" height="5" fill="#555"/><rect x="0" y="6" width="13" height="5" fill="#555"/><path d="M9 12H15L12 15Z" fill="#333"/></svg>
<div class="a" style="left:356px;top:731px;width:517px;height:26px;background:#f2f2f2;"></div>
<div class="a" style="left:356px;top:757px;width:517px;height:1px;background:#d1d1d1;"></div>
<div class="t" style="left:369px;top:736px;letter-spacing:-0.6px">Frames</div>
<div class="t" style="left:431px;top:736px;letter-spacing:-0.6px">Threads</div>
<div class="a" style="left:356px;top:755px;width:63px;height:2px;background:#8396b8;"></div>
<div class="a" style="left:873px;top:731px;width:1px;height:266px;background:#d1d1d1;"></div>
<div class="a" style="left:356px;top:758px;width:517px;height:32px;background:#f2f2f2;"></div>
<div class="a" style="left:359px;top:762px;width:429px;height:23px;background:#fff;border:1px solid #c4c4c4;border-radius:3px"></div>
<svg class="a" style="left:367px;top:767px;" width="14" height="12" viewBox="0 0 14 12"><path d="M1 6L5 10L13 1" fill="none" stroke="#ed8a5a" stroke-width="2.2"/></svg>
<div class="t" style="left:385px;top:766px;">"main"@1 in group "main": RUNNING</div>
<svg class="a" style="left:771px;top:770px;" width="9" height="6" viewBox="0 0 9 6"><path d="M0 0H9L4.5 6Z" fill="#555"/></svg>
<svg class="a" style="left:800px;top:766px;" width="11" height="13" viewBox="0 0 11 13"><path d="M5.5 1V13M1 5.5L5.5 1L10 5.5" fill="none" stroke="#c0c0c0" stroke-width="1.5"/></svg>
<svg class="a" style="left:826px;top:766px;" width="11" height="13" viewBox="0 0 11 13"><path d="M5.5 0V12M1 7.5L5.5 12L10 7.5" fill="none" stroke="#555" stroke-width="1.5"/></svg>
<svg class="a" style="left:851px;top:766px;" width="14" height="13" viewBox="0 0 14 13"><path d="M0 0H14L8.5 6V13H5.5V6Z" fill="#555"/></svg>
<div class="a" style="left:356px;top:789px;width:517px;height:208px;background:#fdfde6;"></div>
<div class="a" style="left:356px;top:790px;width:517px;height:21px;background:#2675bf;"></div>
<div class="t" style="left:372px;top:793px;width:501px;overflow:hidden;color:#ffffff"><span style="letter-spacing:-0.097px">scanCandidateComponents:421, ClassPathScanningCandidateComponentProvider </span><i>(org.springframework.context.annotation)</i></div>
<div class="t" style="left:372px;top:814px;width:501px;overflow:hidden;color:#808080"><span style="letter-spacing:-0.063px">findCandidateComponents:316, ClassPathScanningCandidateComponentProvider </span><i>(org.springframework.context.annotation)</i></div>
<div class="t" style="left:372px;top:835px;width:501px;overflow:hidden;color:#808080"><span style="letter-spacing:-0.176px">doScan:276, ClassPathBeanDefinitionScanner </span><i>(org.springframework.context.annotation)</i></div>
<div class="t" style="left:372px;top:856px;width:501px;overflow:hidden;color:#808080"><span style="letter-spacing:-0.025px">parse:128, ComponentScanAnnotationParser </span><i>(org.springframework.context.annotation)</i></div>
<div class="t" style="left:372px;top:877px;width:501px;overflow:hidden;color:#808080"><span style="letter-spacing:-0.062px">doProcessConfigurationClass:296, ConfigurationClassParser </span><i>(org.springframework.context.annotation)</i></div>
<div class="t" style="left:372px;top:898px;width:501px;overflow:hidden;color:#808080"><span style="letter-spacing:-0.049px">processConfigurationClass:250, ConfigurationClassParser </span><i>(org.springframework.context.annotation)</i></div>
<div class="t" style="left:372px;top:919px;width:501px;overflow:hidden;color:#808080"><span style="letter-spacing:-0.051px">parse:207, ConfigurationClassParser </span><i>(org.springframework.context.annotation)</i></div>
<div class="t" style="left:372px;top:940px;width:501px;overflow:hidden;color:#808080"><span style="letter-spacing:-0.051px">parse:175, ConfigurationClassParser </span><i>(org.springframework.context.annotation)</i></div>
<div class="t" style="left:372px;top:961px;width:501px;overflow:hidden;color:#808080"><span style="letter-spacing:-0.042px">processConfigBeanDefinitions:331, ConfigurationClassPostProcessor </span><i>(org.springframework.context.annotation)</i></div>
<div class="t" style="left:372px;top:982px;width:501px;overflow:hidden;color:#808080"><span style="letter-spacing:-0.048px">postProcessBeanDefinitionRegistry:247, ConfigurationClassPostProcessor </span><i>(org.springframework.context.annotation)</i></div>
<div class="a" style="left:863px;top:811px;width:10px;height:72px;background:rgba(0,0,0,0.09);"></div>
<div class="a" style="left:863px;top:790px;width:10px;height:21px;background:rgba(255,255,255,0.12);"></div>
<div class="a" style="left:356px;top:990px;width:517px;height:7px;background:rgba(0,0,0,0.03);"></div>
<div class="a" style="left:356px;top:990px;width:200px;height:7px;background:rgba(0,0,0,0.07);"></div>
<div class="a" style="left:874px;top:731px;width:1033px;height:26px;background:#f2f2f2;"></div>
<div class="a" style="left:874px;top:757px;width:1033px;height:1px;background:#d1d1d1;"></div>
<div class="t" style="left:887px;top:736px;">Variables</div>
<div class="a" style="left:874px;top:758px;width:24px;height:239px;background:#f2f2f2;"></div>
<div class="a" style="left:898px;top:758px;width:1px;height:239px;background:#d1d1d1;"></div>
<svg class="a" style="left:880px;top:764px;" width="12" height="12" viewBox="0 0 12 12"><path d="M6 0.5V11.5M0.5 6H11.5" stroke="#555" stroke-width="1.6"/></svg>
<div class="a" style="left:881px;top:796px;width:10px;height:2px;background:#c0c0c0;"></div>
<svg class="a" style="left:880px;top:818px;" width="12" height="7" viewBox="0 0 12 7"><path d="M0 7L6 0L12 7Z" fill="#c8c8c8"/></svg>
<svg class="a" style="left:880px;top:845px;" width="12" height="7" viewBox="0 0 12 7"><path d="M0 0L6 7L12 0Z" fill="#c8c8c8"/></svg>
<svg class="a" style="left:879px;top:867px;" width="14" height="14" viewBox="0 0 14 14"><rect x="3.5" y="3.5" width="10" height="10" fill="none" stroke="#555" stroke-width="1.3"/><path d="M1 11V1H11" fill="none" stroke="#555" stroke-width="1.3"/><path d="M5.5 6.5H11.5M5.5 9H11.5M5.5 11.5H11.5" stroke="#555" stroke-width="1"/></svg>
<div class="a" style="left:875px;top:890px;width:22px;height:21px;background:#d0d0d0;border-radius:3px"></div>
<svg class="a" style="left:878px;top:896px;" width="17" height="9" viewBox="0 0 17 9"><circle cx="4" cy="4.5" r="3.2" fill="none" stroke="#555" stroke-width="1.5"/><circle cx="13" cy="4.5" r="3.2" fill="none" stroke="#555" stroke-width="1.5"/><path d="M7 4H10" stroke="#555" stroke-width="1.3"/></svg>
<div class="a" style="left:899px;top:758px;width:959px;height:239px;background:#ffffff;"></div>
<div class="a" style="left:899px;top:819px;width:959px;height:20px;background:#d5d5d5;"></div>
<svg class="a" style="left:902px;top:763px;" width="8" height="10" viewBox="0 0 8 10"><path d="M0 0L8 4.5L0 9Z" fill="#a6a6a6"/></svg>
<svg class="a" style="left:921px;top:761px;" width="12" height="14" viewBox="0 0 12 14"><path d="M1 2H11M1 5.5H11M1 9H11M1 12.5H11" stroke="#f0b266" stroke-width="2.2"/></svg>
<div class="t" style="left:938px;top:761px"><span style="color:#7b0d0d">this</span><span style="color:#000"> = </span><span style="color:#808080">{ClassPathBeanDefinitionScanner@4359}</span></div>
<svg class="a" style="left:902px;top:783px;" width="8" height="10" viewBox="0 0 8 10"><path d="M0 0L8 4.5L0 9Z" fill="#a6a6a6"/></svg>
<svg class="a" style="left:920px;top:781px;" width="14" height="14" viewBox="0 0 14 14"><circle cx="7" cy="7" r="7" fill="#f5c27a"/></svg>
<div class="t" style="left:923px;top:780px;font-size:12px;color:#555;line-height:16px">p</div>
<div class="t" style="left:938px;top:781px"><span style="color:#7b0d0d">basePackage</span><span style="color:#000"> = </span><span style="color:#067d17">"org.hopehomi"</span></div>
<svg class="a" style="left:921px;top:801px;" width="12" height="14" viewBox="0 0 12 14"><path d="M1 2H11M1 5.5H11M1 9H11M1 12.5H11" stroke="#f0b266" stroke-width="2.2"/></svg>
<div class="t" style="left:938px;top:801px"><span style="color:#7b0d0d">candidates</span><span style="color:#000"> = </span><span style="color:#808080">{LinkedHashSet@5065}</span><span style="color:#000">  size = 0</span></div>
<svg class="a" style="left:901px;top:824px;" width="10" height="8" viewBox="0 0 10 8"><path d="M0 0H9L4.5 8Z" fill="#a6a6a6"/></svg>
<svg class="a" style="left:921px;top:821px;" width="12" height="14" viewBox="0 0 12 14"><path d="M1 2H11M1 5.5H11M1 9H11M1 12.5H11" stroke="#f0b266" stroke-width="2.2"/></svg>
<div class="t" style="left:938px;top:821px"><span style="color:#7b0d0d">packageSearchPath</span><span style="color:#000"> = </span><span style="color:#067d17">"classpath*:org/hopehomi/**/*.class"</span></div>
<svg class="a" style="left:920px;top:843px;" width="8" height="10" viewBox="0 0 8 10"><path d="M0 0L8 4.5L0 9Z" fill="#a6a6a6"/></svg>
<svg class="a" style="left:938px;top:841px;" width="14" height="14" viewBox="0 0 14 14"><circle cx="7" cy="7" r="7" fill="#f5c27a"/><path d="M1 3L3 1" stroke="#888" stroke-width="1.5"/></svg>
<div class="t" style="left:941px;top:840px;font-size:12px;color:#555;line-height:16px">f</div>
<div class="t" style="left:956px;top:841px"><span style="color:#7b0d0d">value</span><span style="color:#000"> = </span><span style="color:#808080">{char[34]@5116}</span></div>
<svg class="a" style="left:938px;top:861px;" width="14" height="14" viewBox="0 0 14 14"><circle cx="7" cy="7" r="7" fill="#f5c27a"/></svg>
<div class="t" style="left:941px;top:860px;font-size:12px;color:#555;line-height:16px">f</div>
<div class="t" style="left:956px;top:861px"><span style="color:#7b0d0d">hash</span><span style="color:#000"> = 0</span></div>
<svg class="a" style="left:902px;top:883px;" width="8" height="10" viewBox="0 0 8 10"><path d="M0 0L8 4.5L0 9Z" fill="#a6a6a6"/></svg>
<svg class="a" style="left:919px;top:884px;" width="17" height="9" viewBox="0 0 17 9"><circle cx="4" cy="4.5" r="3.2" fill="none" stroke="#9aa7b0" stroke-width="1.5"/><circle cx="13" cy="4.5" r="3.2" fill="none" stroke="#9aa7b0" stroke-width="1.5"/><path d="M7 4H10" stroke="#9aa7b0" stroke-width="1.3"/></svg>
<div class="t" style="left:938px;top:881px"><span style="color:#7b0d0d">logger</span><span style="color:#000"> = </span><span style="color:#808080">{LogAdapter$Slf4jLocationAwareLog@4366}</span></div>
<svg class="a" style="left:902px;top:903px;" width="8" height="10" viewBox="0 0 8 10"><path d="M0 0L8 4.5L0 9Z" fill="#a6a6a6"/></svg>
<svg class="a" style="left:919px;top:904px;" width="17" height="9" viewBox="0 0 17 9"><circle cx="4" cy="4.5" r="3.2" fill="none" stroke="#9aa7b0" stroke-width="1.5"/><circle cx="13" cy="4.5" r="3.2" fill="none" stroke="#9aa7b0" stroke-width="1.5"/><path d="M7 4H10" stroke="#9aa7b0" stroke-width="1.3"/></svg>
<div class="t" style="left:938px;top:901px"><span style="color:#7b0d0d">this.resourcePattern</span><span style="color:#000"> = </span><span style="color:#067d17">"**/*.class"</span></div>
<div class="a" style="left:1858px;top:731px;width:1px;height:266px;background:#d1d1d1;"></div>
<div class="a" style="left:1859px;top:731px;width:48px;height:26px;background:#f2f2f2;"></div>
<div class="t" style="left:1871px;top:736px;width:8px;overflow:hidden">M</div>
<div class="a" style="left:1859px;top:755px;width:20px;height:2px;background:#8396b8;"></div>
<svg class="a" style="left:1888px;top:740px;" width="11" height="7" viewBox="0 0 11 7"><path d="M1 1L5.5 5.5L10 1" fill="none" stroke="#555" stroke-width="1.3"/></svg>
<div class="a" style="left:1859px;top:758px;width:48px;height:55px;background:#f2f2f2;"></div>
<div class="a" style="left:1862px;top:761px;width:13px;height:23px;background:#fff;border:1px solid #c4c4c4;border-radius:3px"></div>
<div class="t" style="left:1866px;top:765px;color:#a9b6c8">C</div>
<svg class="a" style="left:1885px;top:766px;" width="15" height="15" viewBox="0 0 15 15"><g transform="scale(1.0714285714285714)"><path d="M6 0.5H8L8.4 2.4L9.8 3L11.4 1.9L12.8 3.3L11.7 4.9L12.3 6.3L14 6.7V8.7L12.3 9.1L11.7 10.5L12.8 12.1L11.4 13.5L9.8 12.4L8.4 13L8 14H6L5.6 13L4.2 12.4L2.6 13.5L1.2 12.1L2.3 10.5L1.7 9.1L0 8.7V6.7L1.7 6.3L2.3 4.9L1.2 3.3L2.6 1.9L4.2 3L5.6 2.4Z" fill="#555"/><circle cx="7" cy="7.5" r="2.2" fill="#f2f2f2"/></g></svg>
<div class="a" style="left:1859px;top:786px;width:48px;height:27px;background:#ffffff;"></div>
<div class="t" style="left:1866px;top:792px;">..</div>
<div class="a" style="left:1873px;top:789px;width:1px;height:22px;background:#c8c8c8;"></div>
<div class="t" style="left:1883px;top:792px;width:24px;overflow:hidden">Count</div>
<div class="a" style="left:1859px;top:812px;width:48px;height:1px;background:#e0e0e0;"></div>
<div class="a" style="left:1859px;top:814px;width:48px;height:183px;background:#ffffff;"></div>
<div class="t" style="left:1858px;top:869px;width:49px;overflow:hidden;color:#808080;direction:rtl;text-align:left"><span style="direction:ltr;unicode-bidi:bidi-override">oaded. <span style="color:#3d7fcc">L</span></span></div>
</body></html>
